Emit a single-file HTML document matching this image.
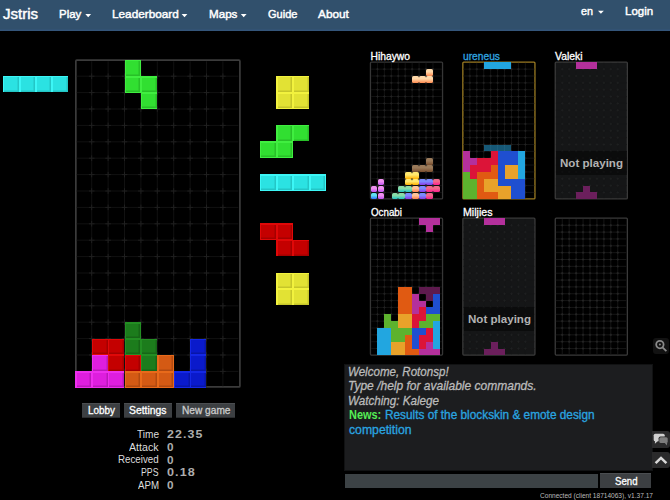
<!DOCTYPE html><html><head><meta charset="utf-8"><style>
html,body{margin:0;padding:0;width:670px;height:500px;overflow:hidden;background:#000;}
body{position:relative;font-family:"Liberation Sans",sans-serif;}
.t{position:absolute;white-space:pre;transform-origin:0 0;}
.bc{position:absolute;}
.bc i{position:absolute;left:1.4px;top:1.4px;right:0.5px;bottom:0.5px;}
.fc{position:absolute;}
.jc{position:absolute;border-radius:1.6px;}
.box{position:absolute;}
</style></head><body><div class="box" style="left:0;top:0;width:670px;height:30.6px;background:#31506c;box-shadow:inset 0 -1.6px 0 #34557a"></div><svg class="box" style="left:0;top:0" width="670" height="31" viewBox="0 0 670 31"><polygon points="85.30,13.90 91.10,13.90 88.20,17.20" fill="#fff"/><polygon points="181.60,13.90 187.40,13.90 184.50,17.20" fill="#fff"/><polygon points="240.80,13.90 246.60,13.90 243.70,17.20" fill="#fff"/><polygon points="598.00,10.70 603.80,10.70 600.90,13.70" fill="#fff"/></svg><svg class="box" style="left:0;top:0" width="670" height="500" viewBox="0 0 670 500"><rect x="75.85" y="60.15" width="164.05" height="326.8" rx="1" fill="none" stroke="#3b3b3b" stroke-width="1.7"/></svg><svg class="box" style="left:0;top:0" width="670" height="500" viewBox="0 0 670 500"><path d="M91.70 61.30V386.30M108.10 61.30V386.30M124.50 61.30V386.30M140.90 61.30V386.30M157.30 61.30V386.30M173.70 61.30V386.30M190.10 61.30V386.30M206.50 61.30V386.30M222.90 61.30V386.30M76.80 76.20H238.30M76.80 92.60H238.30M76.80 109.00H238.30M76.80 125.40H238.30M76.80 141.80H238.30M76.80 158.20H238.30M76.80 174.60H238.30M76.80 191.00H238.30M76.80 207.40H238.30M76.80 223.80H238.30M76.80 240.20H238.30M76.80 256.60H238.30M76.80 273.00H238.30M76.80 289.40H238.30M76.80 305.80H238.30M76.80 322.20H238.30M76.80 338.60H238.30M76.80 355.00H238.30M76.80 371.40H238.30" stroke="#111111" stroke-width="1" fill="none"/><path d="M88.90 76.20H94.50M91.70 73.40V79.00M88.90 92.60H94.50M91.70 89.80V95.40M88.90 109.00H94.50M91.70 106.20V111.80M88.90 125.40H94.50M91.70 122.60V128.20M88.90 141.80H94.50M91.70 139.00V144.60M88.90 158.20H94.50M91.70 155.40V161.00M88.90 174.60H94.50M91.70 171.80V177.40M88.90 191.00H94.50M91.70 188.20V193.80M88.90 207.40H94.50M91.70 204.60V210.20M88.90 223.80H94.50M91.70 221.00V226.60M88.90 240.20H94.50M91.70 237.40V243.00M88.90 256.60H94.50M91.70 253.80V259.40M88.90 273.00H94.50M91.70 270.20V275.80M88.90 289.40H94.50M91.70 286.60V292.20M88.90 305.80H94.50M91.70 303.00V308.60M88.90 322.20H94.50M91.70 319.40V325.00M88.90 338.60H94.50M91.70 335.80V341.40M88.90 355.00H94.50M91.70 352.20V357.80M88.90 371.40H94.50M91.70 368.60V374.20M105.30 76.20H110.90M108.10 73.40V79.00M105.30 92.60H110.90M108.10 89.80V95.40M105.30 109.00H110.90M108.10 106.20V111.80M105.30 125.40H110.90M108.10 122.60V128.20M105.30 141.80H110.90M108.10 139.00V144.60M105.30 158.20H110.90M108.10 155.40V161.00M105.30 174.60H110.90M108.10 171.80V177.40M105.30 191.00H110.90M108.10 188.20V193.80M105.30 207.40H110.90M108.10 204.60V210.20M105.30 223.80H110.90M108.10 221.00V226.60M105.30 240.20H110.90M108.10 237.40V243.00M105.30 256.60H110.90M108.10 253.80V259.40M105.30 273.00H110.90M108.10 270.20V275.80M105.30 289.40H110.90M108.10 286.60V292.20M105.30 305.80H110.90M108.10 303.00V308.60M105.30 322.20H110.90M108.10 319.40V325.00M105.30 338.60H110.90M108.10 335.80V341.40M105.30 355.00H110.90M108.10 352.20V357.80M105.30 371.40H110.90M108.10 368.60V374.20M121.70 76.20H127.30M124.50 73.40V79.00M121.70 92.60H127.30M124.50 89.80V95.40M121.70 109.00H127.30M124.50 106.20V111.80M121.70 125.40H127.30M124.50 122.60V128.20M121.70 141.80H127.30M124.50 139.00V144.60M121.70 158.20H127.30M124.50 155.40V161.00M121.70 174.60H127.30M124.50 171.80V177.40M121.70 191.00H127.30M124.50 188.20V193.80M121.70 207.40H127.30M124.50 204.60V210.20M121.70 223.80H127.30M124.50 221.00V226.60M121.70 240.20H127.30M124.50 237.40V243.00M121.70 256.60H127.30M124.50 253.80V259.40M121.70 273.00H127.30M124.50 270.20V275.80M121.70 289.40H127.30M124.50 286.60V292.20M121.70 305.80H127.30M124.50 303.00V308.60M121.70 322.20H127.30M124.50 319.40V325.00M121.70 338.60H127.30M124.50 335.80V341.40M121.70 355.00H127.30M124.50 352.20V357.80M121.70 371.40H127.30M124.50 368.60V374.20M138.10 76.20H143.70M140.90 73.40V79.00M138.10 92.60H143.70M140.90 89.80V95.40M138.10 109.00H143.70M140.90 106.20V111.80M138.10 125.40H143.70M140.90 122.60V128.20M138.10 141.80H143.70M140.90 139.00V144.60M138.10 158.20H143.70M140.90 155.40V161.00M138.10 174.60H143.70M140.90 171.80V177.40M138.10 191.00H143.70M140.90 188.20V193.80M138.10 207.40H143.70M140.90 204.60V210.20M138.10 223.80H143.70M140.90 221.00V226.60M138.10 240.20H143.70M140.90 237.40V243.00M138.10 256.60H143.70M140.90 253.80V259.40M138.10 273.00H143.70M140.90 270.20V275.80M138.10 289.40H143.70M140.90 286.60V292.20M138.10 305.80H143.70M140.90 303.00V308.60M138.10 322.20H143.70M140.90 319.40V325.00M138.10 338.60H143.70M140.90 335.80V341.40M138.10 355.00H143.70M140.90 352.20V357.80M138.10 371.40H143.70M140.90 368.60V374.20M154.50 76.20H160.10M157.30 73.40V79.00M154.50 92.60H160.10M157.30 89.80V95.40M154.50 109.00H160.10M157.30 106.20V111.80M154.50 125.40H160.10M157.30 122.60V128.20M154.50 141.80H160.10M157.30 139.00V144.60M154.50 158.20H160.10M157.30 155.40V161.00M154.50 174.60H160.10M157.30 171.80V177.40M154.50 191.00H160.10M157.30 188.20V193.80M154.50 207.40H160.10M157.30 204.60V210.20M154.50 223.80H160.10M157.30 221.00V226.60M154.50 240.20H160.10M157.30 237.40V243.00M154.50 256.60H160.10M157.30 253.80V259.40M154.50 273.00H160.10M157.30 270.20V275.80M154.50 289.40H160.10M157.30 286.60V292.20M154.50 305.80H160.10M157.30 303.00V308.60M154.50 322.20H160.10M157.30 319.40V325.00M154.50 338.60H160.10M157.30 335.80V341.40M154.50 355.00H160.10M157.30 352.20V357.80M154.50 371.40H160.10M157.30 368.60V374.20M170.90 76.20H176.50M173.70 73.40V79.00M170.90 92.60H176.50M173.70 89.80V95.40M170.90 109.00H176.50M173.70 106.20V111.80M170.90 125.40H176.50M173.70 122.60V128.20M170.90 141.80H176.50M173.70 139.00V144.60M170.90 158.20H176.50M173.70 155.40V161.00M170.90 174.60H176.50M173.70 171.80V177.40M170.90 191.00H176.50M173.70 188.20V193.80M170.90 207.40H176.50M173.70 204.60V210.20M170.90 223.80H176.50M173.70 221.00V226.60M170.90 240.20H176.50M173.70 237.40V243.00M170.90 256.60H176.50M173.70 253.80V259.40M170.90 273.00H176.50M173.70 270.20V275.80M170.90 289.40H176.50M173.70 286.60V292.20M170.90 305.80H176.50M173.70 303.00V308.60M170.90 322.20H176.50M173.70 319.40V325.00M170.90 338.60H176.50M173.70 335.80V341.40M170.90 355.00H176.50M173.70 352.20V357.80M170.90 371.40H176.50M173.70 368.60V374.20M187.30 76.20H192.90M190.10 73.40V79.00M187.30 92.60H192.90M190.10 89.80V95.40M187.30 109.00H192.90M190.10 106.20V111.80M187.30 125.40H192.90M190.10 122.60V128.20M187.30 141.80H192.90M190.10 139.00V144.60M187.30 158.20H192.90M190.10 155.40V161.00M187.30 174.60H192.90M190.10 171.80V177.40M187.30 191.00H192.90M190.10 188.20V193.80M187.30 207.40H192.90M190.10 204.60V210.20M187.30 223.80H192.90M190.10 221.00V226.60M187.30 240.20H192.90M190.10 237.40V243.00M187.30 256.60H192.90M190.10 253.80V259.40M187.30 273.00H192.90M190.10 270.20V275.80M187.30 289.40H192.90M190.10 286.60V292.20M187.30 305.80H192.90M190.10 303.00V308.60M187.30 322.20H192.90M190.10 319.40V325.00M187.30 338.60H192.90M190.10 335.80V341.40M187.30 355.00H192.90M190.10 352.20V357.80M187.30 371.40H192.90M190.10 368.60V374.20M203.70 76.20H209.30M206.50 73.40V79.00M203.70 92.60H209.30M206.50 89.80V95.40M203.70 109.00H209.30M206.50 106.20V111.80M203.70 125.40H209.30M206.50 122.60V128.20M203.70 141.80H209.30M206.50 139.00V144.60M203.70 158.20H209.30M206.50 155.40V161.00M203.70 174.60H209.30M206.50 171.80V177.40M203.70 191.00H209.30M206.50 188.20V193.80M203.70 207.40H209.30M206.50 204.60V210.20M203.70 223.80H209.30M206.50 221.00V226.60M203.70 240.20H209.30M206.50 237.40V243.00M203.70 256.60H209.30M206.50 253.80V259.40M203.70 273.00H209.30M206.50 270.20V275.80M203.70 289.40H209.30M206.50 286.60V292.20M203.70 305.80H209.30M206.50 303.00V308.60M203.70 322.20H209.30M206.50 319.40V325.00M203.70 338.60H209.30M206.50 335.80V341.40M203.70 355.00H209.30M206.50 352.20V357.80M203.70 371.40H209.30M206.50 368.60V374.20M220.10 76.20H225.70M222.90 73.40V79.00M220.10 92.60H225.70M222.90 89.80V95.40M220.10 109.00H225.70M222.90 106.20V111.80M220.10 125.40H225.70M222.90 122.60V128.20M220.10 141.80H225.70M222.90 139.00V144.60M220.10 158.20H225.70M222.90 155.40V161.00M220.10 174.60H225.70M222.90 171.80V177.40M220.10 191.00H225.70M222.90 188.20V193.80M220.10 207.40H225.70M222.90 204.60V210.20M220.10 223.80H225.70M222.90 221.00V226.60M220.10 240.20H225.70M222.90 237.40V243.00M220.10 256.60H225.70M222.90 253.80V259.40M220.10 273.00H225.70M222.90 270.20V275.80M220.10 289.40H225.70M222.90 286.60V292.20M220.10 305.80H225.70M222.90 303.00V308.60M220.10 322.20H225.70M222.90 319.40V325.00M220.10 338.60H225.70M222.90 335.80V341.40M220.10 355.00H225.70M222.90 352.20V357.80M220.10 371.40H225.70M222.90 368.60V374.20" stroke="#1f1f1f" stroke-width="1" fill="none"/></svg><div class="bc" style="left:124.5px;top:59.8px;width:16.4px;height:16.4px;background:#40ee40"><i style="background:#31df31;box-shadow:inset -1.5px -1.5px 0 #28c028"></i></div><div class="bc" style="left:124.5px;top:76.2px;width:16.4px;height:16.4px;background:#40ee40"><i style="background:#31df31;box-shadow:inset -1.5px -1.5px 0 #28c028"></i></div><div class="bc" style="left:140.9px;top:76.2px;width:16.4px;height:16.4px;background:#40ee40"><i style="background:#31df31;box-shadow:inset -1.5px -1.5px 0 #28c028"></i></div><div class="bc" style="left:140.9px;top:92.6px;width:16.4px;height:16.4px;background:#40ee40"><i style="background:#31df31;box-shadow:inset -1.5px -1.5px 0 #28c028"></i></div><div class="bc" style="left:124.5px;top:322.2px;width:16.4px;height:16.4px;background:#238e23"><i style="background:#1c7c1c;box-shadow:inset -1.5px -1.5px 0 #176617"></i></div><div class="bc" style="left:91.7px;top:338.6px;width:16.4px;height:16.4px;background:#e00808"><i style="background:#c40000;box-shadow:inset -1.5px -1.5px 0 #a40000"></i></div><div class="bc" style="left:108.1px;top:338.6px;width:16.4px;height:16.4px;background:#e00808"><i style="background:#c40000;box-shadow:inset -1.5px -1.5px 0 #a40000"></i></div><div class="bc" style="left:124.5px;top:338.6px;width:16.4px;height:16.4px;background:#238e23"><i style="background:#1c7c1c;box-shadow:inset -1.5px -1.5px 0 #176617"></i></div><div class="bc" style="left:140.9px;top:338.6px;width:16.4px;height:16.4px;background:#238e23"><i style="background:#1c7c1c;box-shadow:inset -1.5px -1.5px 0 #176617"></i></div><div class="bc" style="left:190.1px;top:338.6px;width:16.4px;height:16.4px;background:#1428e6"><i style="background:#0a1acb;box-shadow:inset -1.5px -1.5px 0 #0816a8"></i></div><div class="bc" style="left:91.7px;top:355px;width:16.4px;height:16.4px;background:#ee2eee"><i style="background:#de1ede;box-shadow:inset -1.5px -1.5px 0 #ba18ba"></i></div><div class="bc" style="left:108.1px;top:355px;width:16.4px;height:16.4px;background:#e00808"><i style="background:#c40000;box-shadow:inset -1.5px -1.5px 0 #a40000"></i></div><div class="bc" style="left:124.5px;top:355px;width:16.4px;height:16.4px;background:#e00808"><i style="background:#c40000;box-shadow:inset -1.5px -1.5px 0 #a40000"></i></div><div class="bc" style="left:140.9px;top:355px;width:16.4px;height:16.4px;background:#238e23"><i style="background:#1c7c1c;box-shadow:inset -1.5px -1.5px 0 #176617"></i></div><div class="bc" style="left:157.3px;top:355px;width:16.4px;height:16.4px;background:#e86a1a"><i style="background:#d45a14;box-shadow:inset -1.5px -1.5px 0 #b24a10"></i></div><div class="bc" style="left:190.1px;top:355px;width:16.4px;height:16.4px;background:#1428e6"><i style="background:#0a1acb;box-shadow:inset -1.5px -1.5px 0 #0816a8"></i></div><div class="bc" style="left:75.3px;top:371.4px;width:16.4px;height:16.4px;background:#ee2eee"><i style="background:#de1ede;box-shadow:inset -1.5px -1.5px 0 #ba18ba"></i></div><div class="bc" style="left:91.7px;top:371.4px;width:16.4px;height:16.4px;background:#ee2eee"><i style="background:#de1ede;box-shadow:inset -1.5px -1.5px 0 #ba18ba"></i></div><div class="bc" style="left:108.1px;top:371.4px;width:16.4px;height:16.4px;background:#ee2eee"><i style="background:#de1ede;box-shadow:inset -1.5px -1.5px 0 #ba18ba"></i></div><div class="bc" style="left:124.5px;top:371.4px;width:16.4px;height:16.4px;background:#e86a1a"><i style="background:#d45a14;box-shadow:inset -1.5px -1.5px 0 #b24a10"></i></div><div class="bc" style="left:140.9px;top:371.4px;width:16.4px;height:16.4px;background:#e86a1a"><i style="background:#d45a14;box-shadow:inset -1.5px -1.5px 0 #b24a10"></i></div><div class="bc" style="left:157.3px;top:371.4px;width:16.4px;height:16.4px;background:#e86a1a"><i style="background:#d45a14;box-shadow:inset -1.5px -1.5px 0 #b24a10"></i></div><div class="bc" style="left:173.7px;top:371.4px;width:16.4px;height:16.4px;background:#1428e6"><i style="background:#0a1acb;box-shadow:inset -1.5px -1.5px 0 #0816a8"></i></div><div class="bc" style="left:190.1px;top:371.4px;width:16.4px;height:16.4px;background:#1428e6"><i style="background:#0a1acb;box-shadow:inset -1.5px -1.5px 0 #0816a8"></i></div><div class="bc" style="left:3px;top:75.9px;width:16.3px;height:16.3px;background:#3cf6f6"><i style="background:#2be2e2;box-shadow:inset -1.5px -1.5px 0 #24c6c6"></i></div><div class="bc" style="left:19.3px;top:75.9px;width:16.3px;height:16.3px;background:#3cf6f6"><i style="background:#2be2e2;box-shadow:inset -1.5px -1.5px 0 #24c6c6"></i></div><div class="bc" style="left:35.6px;top:75.9px;width:16.3px;height:16.3px;background:#3cf6f6"><i style="background:#2be2e2;box-shadow:inset -1.5px -1.5px 0 #24c6c6"></i></div><div class="bc" style="left:51.9px;top:75.9px;width:16.3px;height:16.3px;background:#3cf6f6"><i style="background:#2be2e2;box-shadow:inset -1.5px -1.5px 0 #24c6c6"></i></div><div class="bc" style="left:276.4px;top:75.8px;width:16.4px;height:16.4px;background:#f2f23e"><i style="background:#e2e234;box-shadow:inset -1.5px -1.5px 0 #c6c62a"></i></div><div class="bc" style="left:292.8px;top:75.8px;width:16.4px;height:16.4px;background:#f2f23e"><i style="background:#e2e234;box-shadow:inset -1.5px -1.5px 0 #c6c62a"></i></div><div class="bc" style="left:276.4px;top:92.2px;width:16.4px;height:16.4px;background:#f2f23e"><i style="background:#e2e234;box-shadow:inset -1.5px -1.5px 0 #c6c62a"></i></div><div class="bc" style="left:292.8px;top:92.2px;width:16.4px;height:16.4px;background:#f2f23e"><i style="background:#e2e234;box-shadow:inset -1.5px -1.5px 0 #c6c62a"></i></div><div class="bc" style="left:276.4px;top:125px;width:16.4px;height:16.4px;background:#40ee40"><i style="background:#31df31;box-shadow:inset -1.5px -1.5px 0 #28c028"></i></div><div class="bc" style="left:292.8px;top:125px;width:16.4px;height:16.4px;background:#40ee40"><i style="background:#31df31;box-shadow:inset -1.5px -1.5px 0 #28c028"></i></div><div class="bc" style="left:260px;top:141.4px;width:16.4px;height:16.4px;background:#40ee40"><i style="background:#31df31;box-shadow:inset -1.5px -1.5px 0 #28c028"></i></div><div class="bc" style="left:276.4px;top:141.4px;width:16.4px;height:16.4px;background:#40ee40"><i style="background:#31df31;box-shadow:inset -1.5px -1.5px 0 #28c028"></i></div><div class="bc" style="left:260px;top:174.2px;width:16.4px;height:16.4px;background:#3cf6f6"><i style="background:#2be2e2;box-shadow:inset -1.5px -1.5px 0 #24c6c6"></i></div><div class="bc" style="left:276.4px;top:174.2px;width:16.4px;height:16.4px;background:#3cf6f6"><i style="background:#2be2e2;box-shadow:inset -1.5px -1.5px 0 #24c6c6"></i></div><div class="bc" style="left:292.8px;top:174.2px;width:16.4px;height:16.4px;background:#3cf6f6"><i style="background:#2be2e2;box-shadow:inset -1.5px -1.5px 0 #24c6c6"></i></div><div class="bc" style="left:309.2px;top:174.2px;width:16.4px;height:16.4px;background:#3cf6f6"><i style="background:#2be2e2;box-shadow:inset -1.5px -1.5px 0 #24c6c6"></i></div><div class="bc" style="left:260px;top:223.4px;width:16.4px;height:16.4px;background:#e00808"><i style="background:#c40000;box-shadow:inset -1.5px -1.5px 0 #a40000"></i></div><div class="bc" style="left:276.4px;top:223.4px;width:16.4px;height:16.4px;background:#e00808"><i style="background:#c40000;box-shadow:inset -1.5px -1.5px 0 #a40000"></i></div><div class="bc" style="left:276.4px;top:239.8px;width:16.4px;height:16.4px;background:#e00808"><i style="background:#c40000;box-shadow:inset -1.5px -1.5px 0 #a40000"></i></div><div class="bc" style="left:292.8px;top:239.8px;width:16.4px;height:16.4px;background:#e00808"><i style="background:#c40000;box-shadow:inset -1.5px -1.5px 0 #a40000"></i></div><div class="bc" style="left:276.4px;top:272.6px;width:16.4px;height:16.4px;background:#f2f23e"><i style="background:#e2e234;box-shadow:inset -1.5px -1.5px 0 #c6c62a"></i></div><div class="bc" style="left:292.8px;top:272.6px;width:16.4px;height:16.4px;background:#f2f23e"><i style="background:#e2e234;box-shadow:inset -1.5px -1.5px 0 #c6c62a"></i></div><div class="bc" style="left:276.4px;top:289px;width:16.4px;height:16.4px;background:#f2f23e"><i style="background:#e2e234;box-shadow:inset -1.5px -1.5px 0 #c6c62a"></i></div><div class="bc" style="left:292.8px;top:289px;width:16.4px;height:16.4px;background:#f2f23e"><i style="background:#e2e234;box-shadow:inset -1.5px -1.5px 0 #c6c62a"></i></div><svg class="box" style="left:0;top:0" width="670" height="500" viewBox="0 0 670 500"><rect x="370.45" y="62.05" width="72.10" height="136.90" rx="1" fill="#000" stroke="#363636" stroke-width="1.3"/></svg><svg class="box" style="left:0;top:0" width="670" height="500" viewBox="0 0 670 500"><path d="M377.44 62.90V198.10M384.38 62.90V198.10M391.32 62.90V198.10M398.26 62.90V198.10M405.20 62.90V198.10M412.14 62.90V198.10M419.08 62.90V198.10M426.02 62.90V198.10M432.96 62.90V198.10M371.10 69.15H441.90M371.10 76.00H441.90M371.10 82.85H441.90M371.10 89.70H441.90M371.10 96.55H441.90M371.10 103.40H441.90M371.10 110.25H441.90M371.10 117.10H441.90M371.10 123.95H441.90M371.10 130.80H441.90M371.10 137.65H441.90M371.10 144.50H441.90M371.10 151.35H441.90M371.10 158.20H441.90M371.10 165.05H441.90M371.10 171.90H441.90M371.10 178.75H441.90M371.10 185.60H441.90M371.10 192.45H441.90" stroke="#121212" stroke-width="1" fill="none"/><path d="M376.24 69.15H378.64M377.44 67.95V70.35M376.24 76.00H378.64M377.44 74.80V77.20M376.24 82.85H378.64M377.44 81.65V84.05M376.24 89.70H378.64M377.44 88.50V90.90M376.24 96.55H378.64M377.44 95.35V97.75M376.24 103.40H378.64M377.44 102.20V104.60M376.24 110.25H378.64M377.44 109.05V111.45M376.24 117.10H378.64M377.44 115.90V118.30M376.24 123.95H378.64M377.44 122.75V125.15M376.24 130.80H378.64M377.44 129.60V132.00M376.24 137.65H378.64M377.44 136.45V138.85M376.24 144.50H378.64M377.44 143.30V145.70M376.24 151.35H378.64M377.44 150.15V152.55M376.24 158.20H378.64M377.44 157.00V159.40M376.24 165.05H378.64M377.44 163.85V166.25M376.24 171.90H378.64M377.44 170.70V173.10M376.24 178.75H378.64M377.44 177.55V179.95M376.24 185.60H378.64M377.44 184.40V186.80M376.24 192.45H378.64M377.44 191.25V193.65M383.18 69.15H385.58M384.38 67.95V70.35M383.18 76.00H385.58M384.38 74.80V77.20M383.18 82.85H385.58M384.38 81.65V84.05M383.18 89.70H385.58M384.38 88.50V90.90M383.18 96.55H385.58M384.38 95.35V97.75M383.18 103.40H385.58M384.38 102.20V104.60M383.18 110.25H385.58M384.38 109.05V111.45M383.18 117.10H385.58M384.38 115.90V118.30M383.18 123.95H385.58M384.38 122.75V125.15M383.18 130.80H385.58M384.38 129.60V132.00M383.18 137.65H385.58M384.38 136.45V138.85M383.18 144.50H385.58M384.38 143.30V145.70M383.18 151.35H385.58M384.38 150.15V152.55M383.18 158.20H385.58M384.38 157.00V159.40M383.18 165.05H385.58M384.38 163.85V166.25M383.18 171.90H385.58M384.38 170.70V173.10M383.18 178.75H385.58M384.38 177.55V179.95M383.18 185.60H385.58M384.38 184.40V186.80M383.18 192.45H385.58M384.38 191.25V193.65M390.12 69.15H392.52M391.32 67.95V70.35M390.12 76.00H392.52M391.32 74.80V77.20M390.12 82.85H392.52M391.32 81.65V84.05M390.12 89.70H392.52M391.32 88.50V90.90M390.12 96.55H392.52M391.32 95.35V97.75M390.12 103.40H392.52M391.32 102.20V104.60M390.12 110.25H392.52M391.32 109.05V111.45M390.12 117.10H392.52M391.32 115.90V118.30M390.12 123.95H392.52M391.32 122.75V125.15M390.12 130.80H392.52M391.32 129.60V132.00M390.12 137.65H392.52M391.32 136.45V138.85M390.12 144.50H392.52M391.32 143.30V145.70M390.12 151.35H392.52M391.32 150.15V152.55M390.12 158.20H392.52M391.32 157.00V159.40M390.12 165.05H392.52M391.32 163.85V166.25M390.12 171.90H392.52M391.32 170.70V173.10M390.12 178.75H392.52M391.32 177.55V179.95M390.12 185.60H392.52M391.32 184.40V186.80M390.12 192.45H392.52M391.32 191.25V193.65M397.06 69.15H399.46M398.26 67.95V70.35M397.06 76.00H399.46M398.26 74.80V77.20M397.06 82.85H399.46M398.26 81.65V84.05M397.06 89.70H399.46M398.26 88.50V90.90M397.06 96.55H399.46M398.26 95.35V97.75M397.06 103.40H399.46M398.26 102.20V104.60M397.06 110.25H399.46M398.26 109.05V111.45M397.06 117.10H399.46M398.26 115.90V118.30M397.06 123.95H399.46M398.26 122.75V125.15M397.06 130.80H399.46M398.26 129.60V132.00M397.06 137.65H399.46M398.26 136.45V138.85M397.06 144.50H399.46M398.26 143.30V145.70M397.06 151.35H399.46M398.26 150.15V152.55M397.06 158.20H399.46M398.26 157.00V159.40M397.06 165.05H399.46M398.26 163.85V166.25M397.06 171.90H399.46M398.26 170.70V173.10M397.06 178.75H399.46M398.26 177.55V179.95M397.06 185.60H399.46M398.26 184.40V186.80M397.06 192.45H399.46M398.26 191.25V193.65M404.00 69.15H406.40M405.20 67.95V70.35M404.00 76.00H406.40M405.20 74.80V77.20M404.00 82.85H406.40M405.20 81.65V84.05M404.00 89.70H406.40M405.20 88.50V90.90M404.00 96.55H406.40M405.20 95.35V97.75M404.00 103.40H406.40M405.20 102.20V104.60M404.00 110.25H406.40M405.20 109.05V111.45M404.00 117.10H406.40M405.20 115.90V118.30M404.00 123.95H406.40M405.20 122.75V125.15M404.00 130.80H406.40M405.20 129.60V132.00M404.00 137.65H406.40M405.20 136.45V138.85M404.00 144.50H406.40M405.20 143.30V145.70M404.00 151.35H406.40M405.20 150.15V152.55M404.00 158.20H406.40M405.20 157.00V159.40M404.00 165.05H406.40M405.20 163.85V166.25M404.00 171.90H406.40M405.20 170.70V173.10M404.00 178.75H406.40M405.20 177.55V179.95M404.00 185.60H406.40M405.20 184.40V186.80M404.00 192.45H406.40M405.20 191.25V193.65M410.94 69.15H413.34M412.14 67.95V70.35M410.94 76.00H413.34M412.14 74.80V77.20M410.94 82.85H413.34M412.14 81.65V84.05M410.94 89.70H413.34M412.14 88.50V90.90M410.94 96.55H413.34M412.14 95.35V97.75M410.94 103.40H413.34M412.14 102.20V104.60M410.94 110.25H413.34M412.14 109.05V111.45M410.94 117.10H413.34M412.14 115.90V118.30M410.94 123.95H413.34M412.14 122.75V125.15M410.94 130.80H413.34M412.14 129.60V132.00M410.94 137.65H413.34M412.14 136.45V138.85M410.94 144.50H413.34M412.14 143.30V145.70M410.94 151.35H413.34M412.14 150.15V152.55M410.94 158.20H413.34M412.14 157.00V159.40M410.94 165.05H413.34M412.14 163.85V166.25M410.94 171.90H413.34M412.14 170.70V173.10M410.94 178.75H413.34M412.14 177.55V179.95M410.94 185.60H413.34M412.14 184.40V186.80M410.94 192.45H413.34M412.14 191.25V193.65M417.88 69.15H420.28M419.08 67.95V70.35M417.88 76.00H420.28M419.08 74.80V77.20M417.88 82.85H420.28M419.08 81.65V84.05M417.88 89.70H420.28M419.08 88.50V90.90M417.88 96.55H420.28M419.08 95.35V97.75M417.88 103.40H420.28M419.08 102.20V104.60M417.88 110.25H420.28M419.08 109.05V111.45M417.88 117.10H420.28M419.08 115.90V118.30M417.88 123.95H420.28M419.08 122.75V125.15M417.88 130.80H420.28M419.08 129.60V132.00M417.88 137.65H420.28M419.08 136.45V138.85M417.88 144.50H420.28M419.08 143.30V145.70M417.88 151.35H420.28M419.08 150.15V152.55M417.88 158.20H420.28M419.08 157.00V159.40M417.88 165.05H420.28M419.08 163.85V166.25M417.88 171.90H420.28M419.08 170.70V173.10M417.88 178.75H420.28M419.08 177.55V179.95M417.88 185.60H420.28M419.08 184.40V186.80M417.88 192.45H420.28M419.08 191.25V193.65M424.82 69.15H427.22M426.02 67.95V70.35M424.82 76.00H427.22M426.02 74.80V77.20M424.82 82.85H427.22M426.02 81.65V84.05M424.82 89.70H427.22M426.02 88.50V90.90M424.82 96.55H427.22M426.02 95.35V97.75M424.82 103.40H427.22M426.02 102.20V104.60M424.82 110.25H427.22M426.02 109.05V111.45M424.82 117.10H427.22M426.02 115.90V118.30M424.82 123.95H427.22M426.02 122.75V125.15M424.82 130.80H427.22M426.02 129.60V132.00M424.82 137.65H427.22M426.02 136.45V138.85M424.82 144.50H427.22M426.02 143.30V145.70M424.82 151.35H427.22M426.02 150.15V152.55M424.82 158.20H427.22M426.02 157.00V159.40M424.82 165.05H427.22M426.02 163.85V166.25M424.82 171.90H427.22M426.02 170.70V173.10M424.82 178.75H427.22M426.02 177.55V179.95M424.82 185.60H427.22M426.02 184.40V186.80M424.82 192.45H427.22M426.02 191.25V193.65M431.76 69.15H434.16M432.96 67.95V70.35M431.76 76.00H434.16M432.96 74.80V77.20M431.76 82.85H434.16M432.96 81.65V84.05M431.76 89.70H434.16M432.96 88.50V90.90M431.76 96.55H434.16M432.96 95.35V97.75M431.76 103.40H434.16M432.96 102.20V104.60M431.76 110.25H434.16M432.96 109.05V111.45M431.76 117.10H434.16M432.96 115.90V118.30M431.76 123.95H434.16M432.96 122.75V125.15M431.76 130.80H434.16M432.96 129.60V132.00M431.76 137.65H434.16M432.96 136.45V138.85M431.76 144.50H434.16M432.96 143.30V145.70M431.76 151.35H434.16M432.96 150.15V152.55M431.76 158.20H434.16M432.96 157.00V159.40M431.76 165.05H434.16M432.96 163.85V166.25M431.76 171.90H434.16M432.96 170.70V173.10M431.76 178.75H434.16M432.96 177.55V179.95M431.76 185.60H434.16M432.96 184.40V186.80M431.76 192.45H434.16M432.96 191.25V193.65" stroke="#222222" stroke-width="1" fill="none"/></svg><div class="jc" style="left:426.22px;top:69.35px;width:6.54px;height:6.45px;background:linear-gradient(#ffd8a8 0%,#ffd8a8 40%,#ff8a50 100%)"></div><div class="jc" style="left:412.34px;top:76.2px;width:6.54px;height:6.45px;background:linear-gradient(#ffd8a8 0%,#ffd8a8 40%,#ff8a50 100%)"></div><div class="jc" style="left:419.28px;top:76.2px;width:6.54px;height:6.45px;background:linear-gradient(#ffd8a8 0%,#ffd8a8 40%,#ff8a50 100%)"></div><div class="jc" style="left:426.22px;top:76.2px;width:6.54px;height:6.45px;background:linear-gradient(#ffd8a8 0%,#ffd8a8 40%,#ff8a50 100%)"></div><div class="jc" style="left:426.22px;top:158.4px;width:6.54px;height:6.45px;background:linear-gradient(#9a7a5a 0%,#9a7a5a 40%,#7a4e2e 100%)"></div><div class="jc" style="left:412.34px;top:165.25px;width:6.54px;height:6.45px;background:linear-gradient(#9a7a5a 0%,#9a7a5a 40%,#7a4e2e 100%)"></div><div class="jc" style="left:419.28px;top:165.25px;width:6.54px;height:6.45px;background:linear-gradient(#9a7a5a 0%,#9a7a5a 40%,#7a4e2e 100%)"></div><div class="jc" style="left:426.22px;top:165.25px;width:6.54px;height:6.45px;background:linear-gradient(#9a7a5a 0%,#9a7a5a 40%,#7a4e2e 100%)"></div><div class="jc" style="left:405.4px;top:172.1px;width:6.54px;height:6.45px;background:linear-gradient(#ffe870 0%,#ffe870 40%,#ffb000 100%)"></div><div class="jc" style="left:412.34px;top:172.1px;width:6.54px;height:6.45px;background:linear-gradient(#ffe870 0%,#ffe870 40%,#ffb000 100%)"></div><div class="jc" style="left:377.64px;top:178.95px;width:6.54px;height:6.45px;background:linear-gradient(#f090f0 0%,#f090f0 40%,#c050f0 100%)"></div><div class="jc" style="left:405.4px;top:178.95px;width:6.54px;height:6.45px;background:linear-gradient(#ffe870 0%,#ffe870 40%,#ffb000 100%)"></div><div class="jc" style="left:412.34px;top:178.95px;width:6.54px;height:6.45px;background:linear-gradient(#ffe870 0%,#ffe870 40%,#ffb000 100%)"></div><div class="jc" style="left:419.28px;top:178.95px;width:6.54px;height:6.45px;background:linear-gradient(#7c8cff 0%,#7c8cff 40%,#8a3ae8 100%)"></div><div class="jc" style="left:426.22px;top:178.95px;width:6.54px;height:6.45px;background:linear-gradient(#7c8cff 0%,#7c8cff 40%,#8a3ae8 100%)"></div><div class="jc" style="left:433.16px;top:178.95px;width:6.54px;height:6.45px;background:linear-gradient(#f06a8a 0%,#f06a8a 40%,#ff1f8f 100%)"></div><div class="jc" style="left:370.7px;top:185.8px;width:6.54px;height:6.45px;background:linear-gradient(#f090f0 0%,#f090f0 40%,#c050f0 100%)"></div><div class="jc" style="left:377.64px;top:185.8px;width:6.54px;height:6.45px;background:linear-gradient(#f090f0 0%,#f090f0 40%,#c050f0 100%)"></div><div class="jc" style="left:398.46px;top:185.8px;width:6.54px;height:6.45px;background:linear-gradient(#8adca8 0%,#8adca8 40%,#22c4c4 100%)"></div><div class="jc" style="left:405.4px;top:185.8px;width:6.54px;height:6.45px;background:linear-gradient(#8adca8 0%,#8adca8 40%,#22c4c4 100%)"></div><div class="jc" style="left:412.34px;top:185.8px;width:6.54px;height:6.45px;background:linear-gradient(#ffc49a 0%,#ffc49a 40%,#ff7f4e 100%)"></div><div class="jc" style="left:419.28px;top:185.8px;width:6.54px;height:6.45px;background:linear-gradient(#7c8cff 0%,#7c8cff 40%,#8a3ae8 100%)"></div><div class="jc" style="left:426.22px;top:185.8px;width:6.54px;height:6.45px;background:linear-gradient(#f06a8a 0%,#f06a8a 40%,#ff1f8f 100%)"></div><div class="jc" style="left:433.16px;top:185.8px;width:6.54px;height:6.45px;background:linear-gradient(#f06a8a 0%,#f06a8a 40%,#ff1f8f 100%)"></div><div class="jc" style="left:370.7px;top:192.65px;width:6.54px;height:6.45px;background:linear-gradient(#60e0f0 0%,#60e0f0 40%,#3070ff 100%)"></div><div class="jc" style="left:377.64px;top:192.65px;width:6.54px;height:6.45px;background:linear-gradient(#f090f0 0%,#f090f0 40%,#c050f0 100%)"></div><div class="jc" style="left:391.52px;top:192.65px;width:6.54px;height:6.45px;background:linear-gradient(#8adca8 0%,#8adca8 40%,#22c4c4 100%)"></div><div class="jc" style="left:398.46px;top:192.65px;width:6.54px;height:6.45px;background:linear-gradient(#8adca8 0%,#8adca8 40%,#22c4c4 100%)"></div><div class="jc" style="left:405.4px;top:192.65px;width:6.54px;height:6.45px;background:linear-gradient(#7c8cff 0%,#7c8cff 40%,#8a3ae8 100%)"></div><div class="jc" style="left:412.34px;top:192.65px;width:6.54px;height:6.45px;background:linear-gradient(#ffc49a 0%,#ffc49a 40%,#ff7f4e 100%)"></div><div class="jc" style="left:419.28px;top:192.65px;width:6.54px;height:6.45px;background:linear-gradient(#7c8cff 0%,#7c8cff 40%,#8a3ae8 100%)"></div><div class="jc" style="left:426.22px;top:192.65px;width:6.54px;height:6.45px;background:linear-gradient(#f06a8a 0%,#f06a8a 40%,#ff1f8f 100%)"></div><svg class="box" style="left:0;top:0" width="670" height="500" viewBox="0 0 670 500"><rect x="462.85" y="62.05" width="72.10" height="136.90" rx="1" fill="#000" stroke="#9a7a22" stroke-width="1.3"/></svg><svg class="box" style="left:0;top:0" width="670" height="500" viewBox="0 0 670 500"><path d="M469.84 62.90V198.10M476.78 62.90V198.10M483.72 62.90V198.10M490.66 62.90V198.10M497.60 62.90V198.10M504.54 62.90V198.10M511.48 62.90V198.10M518.42 62.90V198.10M525.36 62.90V198.10M463.50 69.15H534.30M463.50 76.00H534.30M463.50 82.85H534.30M463.50 89.70H534.30M463.50 96.55H534.30M463.50 103.40H534.30M463.50 110.25H534.30M463.50 117.10H534.30M463.50 123.95H534.30M463.50 130.80H534.30M463.50 137.65H534.30M463.50 144.50H534.30M463.50 151.35H534.30M463.50 158.20H534.30M463.50 165.05H534.30M463.50 171.90H534.30M463.50 178.75H534.30M463.50 185.60H534.30M463.50 192.45H534.30" stroke="#121212" stroke-width="1" fill="none"/><path d="M468.64 69.15H471.04M469.84 67.95V70.35M468.64 76.00H471.04M469.84 74.80V77.20M468.64 82.85H471.04M469.84 81.65V84.05M468.64 89.70H471.04M469.84 88.50V90.90M468.64 96.55H471.04M469.84 95.35V97.75M468.64 103.40H471.04M469.84 102.20V104.60M468.64 110.25H471.04M469.84 109.05V111.45M468.64 117.10H471.04M469.84 115.90V118.30M468.64 123.95H471.04M469.84 122.75V125.15M468.64 130.80H471.04M469.84 129.60V132.00M468.64 137.65H471.04M469.84 136.45V138.85M468.64 144.50H471.04M469.84 143.30V145.70M468.64 151.35H471.04M469.84 150.15V152.55M468.64 158.20H471.04M469.84 157.00V159.40M468.64 165.05H471.04M469.84 163.85V166.25M468.64 171.90H471.04M469.84 170.70V173.10M468.64 178.75H471.04M469.84 177.55V179.95M468.64 185.60H471.04M469.84 184.40V186.80M468.64 192.45H471.04M469.84 191.25V193.65M475.58 69.15H477.98M476.78 67.95V70.35M475.58 76.00H477.98M476.78 74.80V77.20M475.58 82.85H477.98M476.78 81.65V84.05M475.58 89.70H477.98M476.78 88.50V90.90M475.58 96.55H477.98M476.78 95.35V97.75M475.58 103.40H477.98M476.78 102.20V104.60M475.58 110.25H477.98M476.78 109.05V111.45M475.58 117.10H477.98M476.78 115.90V118.30M475.58 123.95H477.98M476.78 122.75V125.15M475.58 130.80H477.98M476.78 129.60V132.00M475.58 137.65H477.98M476.78 136.45V138.85M475.58 144.50H477.98M476.78 143.30V145.70M475.58 151.35H477.98M476.78 150.15V152.55M475.58 158.20H477.98M476.78 157.00V159.40M475.58 165.05H477.98M476.78 163.85V166.25M475.58 171.90H477.98M476.78 170.70V173.10M475.58 178.75H477.98M476.78 177.55V179.95M475.58 185.60H477.98M476.78 184.40V186.80M475.58 192.45H477.98M476.78 191.25V193.65M482.52 69.15H484.92M483.72 67.95V70.35M482.52 76.00H484.92M483.72 74.80V77.20M482.52 82.85H484.92M483.72 81.65V84.05M482.52 89.70H484.92M483.72 88.50V90.90M482.52 96.55H484.92M483.72 95.35V97.75M482.52 103.40H484.92M483.72 102.20V104.60M482.52 110.25H484.92M483.72 109.05V111.45M482.52 117.10H484.92M483.72 115.90V118.30M482.52 123.95H484.92M483.72 122.75V125.15M482.52 130.80H484.92M483.72 129.60V132.00M482.52 137.65H484.92M483.72 136.45V138.85M482.52 144.50H484.92M483.72 143.30V145.70M482.52 151.35H484.92M483.72 150.15V152.55M482.52 158.20H484.92M483.72 157.00V159.40M482.52 165.05H484.92M483.72 163.85V166.25M482.52 171.90H484.92M483.72 170.70V173.10M482.52 178.75H484.92M483.72 177.55V179.95M482.52 185.60H484.92M483.72 184.40V186.80M482.52 192.45H484.92M483.72 191.25V193.65M489.46 69.15H491.86M490.66 67.95V70.35M489.46 76.00H491.86M490.66 74.80V77.20M489.46 82.85H491.86M490.66 81.65V84.05M489.46 89.70H491.86M490.66 88.50V90.90M489.46 96.55H491.86M490.66 95.35V97.75M489.46 103.40H491.86M490.66 102.20V104.60M489.46 110.25H491.86M490.66 109.05V111.45M489.46 117.10H491.86M490.66 115.90V118.30M489.46 123.95H491.86M490.66 122.75V125.15M489.46 130.80H491.86M490.66 129.60V132.00M489.46 137.65H491.86M490.66 136.45V138.85M489.46 144.50H491.86M490.66 143.30V145.70M489.46 151.35H491.86M490.66 150.15V152.55M489.46 158.20H491.86M490.66 157.00V159.40M489.46 165.05H491.86M490.66 163.85V166.25M489.46 171.90H491.86M490.66 170.70V173.10M489.46 178.75H491.86M490.66 177.55V179.95M489.46 185.60H491.86M490.66 184.40V186.80M489.46 192.45H491.86M490.66 191.25V193.65M496.40 69.15H498.80M497.60 67.95V70.35M496.40 76.00H498.80M497.60 74.80V77.20M496.40 82.85H498.80M497.60 81.65V84.05M496.40 89.70H498.80M497.60 88.50V90.90M496.40 96.55H498.80M497.60 95.35V97.75M496.40 103.40H498.80M497.60 102.20V104.60M496.40 110.25H498.80M497.60 109.05V111.45M496.40 117.10H498.80M497.60 115.90V118.30M496.40 123.95H498.80M497.60 122.75V125.15M496.40 130.80H498.80M497.60 129.60V132.00M496.40 137.65H498.80M497.60 136.45V138.85M496.40 144.50H498.80M497.60 143.30V145.70M496.40 151.35H498.80M497.60 150.15V152.55M496.40 158.20H498.80M497.60 157.00V159.40M496.40 165.05H498.80M497.60 163.85V166.25M496.40 171.90H498.80M497.60 170.70V173.10M496.40 178.75H498.80M497.60 177.55V179.95M496.40 185.60H498.80M497.60 184.40V186.80M496.40 192.45H498.80M497.60 191.25V193.65M503.34 69.15H505.74M504.54 67.95V70.35M503.34 76.00H505.74M504.54 74.80V77.20M503.34 82.85H505.74M504.54 81.65V84.05M503.34 89.70H505.74M504.54 88.50V90.90M503.34 96.55H505.74M504.54 95.35V97.75M503.34 103.40H505.74M504.54 102.20V104.60M503.34 110.25H505.74M504.54 109.05V111.45M503.34 117.10H505.74M504.54 115.90V118.30M503.34 123.95H505.74M504.54 122.75V125.15M503.34 130.80H505.74M504.54 129.60V132.00M503.34 137.65H505.74M504.54 136.45V138.85M503.34 144.50H505.74M504.54 143.30V145.70M503.34 151.35H505.74M504.54 150.15V152.55M503.34 158.20H505.74M504.54 157.00V159.40M503.34 165.05H505.74M504.54 163.85V166.25M503.34 171.90H505.74M504.54 170.70V173.10M503.34 178.75H505.74M504.54 177.55V179.95M503.34 185.60H505.74M504.54 184.40V186.80M503.34 192.45H505.74M504.54 191.25V193.65M510.28 69.15H512.68M511.48 67.95V70.35M510.28 76.00H512.68M511.48 74.80V77.20M510.28 82.85H512.68M511.48 81.65V84.05M510.28 89.70H512.68M511.48 88.50V90.90M510.28 96.55H512.68M511.48 95.35V97.75M510.28 103.40H512.68M511.48 102.20V104.60M510.28 110.25H512.68M511.48 109.05V111.45M510.28 117.10H512.68M511.48 115.90V118.30M510.28 123.95H512.68M511.48 122.75V125.15M510.28 130.80H512.68M511.48 129.60V132.00M510.28 137.65H512.68M511.48 136.45V138.85M510.28 144.50H512.68M511.48 143.30V145.70M510.28 151.35H512.68M511.48 150.15V152.55M510.28 158.20H512.68M511.48 157.00V159.40M510.28 165.05H512.68M511.48 163.85V166.25M510.28 171.90H512.68M511.48 170.70V173.10M510.28 178.75H512.68M511.48 177.55V179.95M510.28 185.60H512.68M511.48 184.40V186.80M510.28 192.45H512.68M511.48 191.25V193.65M517.22 69.15H519.62M518.42 67.95V70.35M517.22 76.00H519.62M518.42 74.80V77.20M517.22 82.85H519.62M518.42 81.65V84.05M517.22 89.70H519.62M518.42 88.50V90.90M517.22 96.55H519.62M518.42 95.35V97.75M517.22 103.40H519.62M518.42 102.20V104.60M517.22 110.25H519.62M518.42 109.05V111.45M517.22 117.10H519.62M518.42 115.90V118.30M517.22 123.95H519.62M518.42 122.75V125.15M517.22 130.80H519.62M518.42 129.60V132.00M517.22 137.65H519.62M518.42 136.45V138.85M517.22 144.50H519.62M518.42 143.30V145.70M517.22 151.35H519.62M518.42 150.15V152.55M517.22 158.20H519.62M518.42 157.00V159.40M517.22 165.05H519.62M518.42 163.85V166.25M517.22 171.90H519.62M518.42 170.70V173.10M517.22 178.75H519.62M518.42 177.55V179.95M517.22 185.60H519.62M518.42 184.40V186.80M517.22 192.45H519.62M518.42 191.25V193.65M524.16 69.15H526.56M525.36 67.95V70.35M524.16 76.00H526.56M525.36 74.80V77.20M524.16 82.85H526.56M525.36 81.65V84.05M524.16 89.70H526.56M525.36 88.50V90.90M524.16 96.55H526.56M525.36 95.35V97.75M524.16 103.40H526.56M525.36 102.20V104.60M524.16 110.25H526.56M525.36 109.05V111.45M524.16 117.10H526.56M525.36 115.90V118.30M524.16 123.95H526.56M525.36 122.75V125.15M524.16 130.80H526.56M525.36 129.60V132.00M524.16 137.65H526.56M525.36 136.45V138.85M524.16 144.50H526.56M525.36 143.30V145.70M524.16 151.35H526.56M525.36 150.15V152.55M524.16 158.20H526.56M525.36 157.00V159.40M524.16 165.05H526.56M525.36 163.85V166.25M524.16 171.90H526.56M525.36 170.70V173.10M524.16 178.75H526.56M525.36 177.55V179.95M524.16 185.60H526.56M525.36 184.40V186.80M524.16 192.45H526.56M525.36 191.25V193.65" stroke="#222222" stroke-width="1" fill="none"/></svg><div class="fc" style="left:483.72px;top:62.3px;width:27.78px;height:6.87px;background:#22a6e0"></div><div class="fc" style="left:483.72px;top:144.5px;width:27.78px;height:6.87px;background:rgba(44,176,236,0.5)"></div><div class="fc" style="left:462.9px;top:151.35px;width:6.96px;height:6.87px;background:#b4309c"></div><div class="fc" style="left:490.66px;top:151.35px;width:6.96px;height:6.87px;background:#dc1438"></div><div class="fc" style="left:497.6px;top:151.35px;width:20.84px;height:6.87px;background:#1f4fd0"></div><div class="fc" style="left:518.42px;top:151.35px;width:6.96px;height:6.87px;background:#22a6e0"></div><div class="fc" style="left:462.9px;top:158.2px;width:13.9px;height:6.87px;background:#b4309c"></div><div class="fc" style="left:476.78px;top:158.2px;width:20.84px;height:6.87px;background:#dc1438"></div><div class="fc" style="left:497.6px;top:158.2px;width:20.84px;height:6.87px;background:#1f4fd0"></div><div class="fc" style="left:518.42px;top:158.2px;width:6.96px;height:6.87px;background:#22a6e0"></div><div class="fc" style="left:462.9px;top:165.05px;width:6.96px;height:6.87px;background:#b4309c"></div><div class="fc" style="left:469.84px;top:165.05px;width:20.84px;height:6.87px;background:#dc1438"></div><div class="fc" style="left:490.66px;top:165.05px;width:6.96px;height:6.87px;background:#e05a12"></div><div class="fc" style="left:497.6px;top:165.05px;width:6.96px;height:6.87px;background:#1f4fd0"></div><div class="fc" style="left:504.54px;top:165.05px;width:13.9px;height:6.87px;background:#e8a22a"></div><div class="fc" style="left:518.42px;top:165.05px;width:6.96px;height:6.87px;background:#22a6e0"></div><div class="fc" style="left:462.9px;top:171.9px;width:6.96px;height:6.87px;background:#5db22e"></div><div class="fc" style="left:469.84px;top:171.9px;width:6.96px;height:6.87px;background:#dc1438"></div><div class="fc" style="left:476.78px;top:171.9px;width:20.84px;height:6.87px;background:#e05a12"></div><div class="fc" style="left:497.6px;top:171.9px;width:6.96px;height:6.87px;background:#1f4fd0"></div><div class="fc" style="left:504.54px;top:171.9px;width:13.9px;height:6.87px;background:#e8a22a"></div><div class="fc" style="left:518.42px;top:171.9px;width:6.96px;height:6.87px;background:#22a6e0"></div><div class="fc" style="left:462.9px;top:178.75px;width:13.9px;height:6.87px;background:#5db22e"></div><div class="fc" style="left:476.78px;top:178.75px;width:6.96px;height:6.87px;background:#e05a12"></div><div class="fc" style="left:483.72px;top:178.75px;width:13.9px;height:6.87px;background:#e8a22a"></div><div class="fc" style="left:497.6px;top:178.75px;width:27.78px;height:6.87px;background:#1f4fd0"></div><div class="fc" style="left:462.9px;top:185.6px;width:13.9px;height:6.87px;background:#5db22e"></div><div class="fc" style="left:476.78px;top:185.6px;width:6.96px;height:6.87px;background:#e05a12"></div><div class="fc" style="left:483.72px;top:185.6px;width:27.78px;height:6.87px;background:#e8a22a"></div><div class="fc" style="left:511.48px;top:185.6px;width:13.9px;height:6.87px;background:#1f4fd0"></div><div class="fc" style="left:462.9px;top:192.45px;width:13.9px;height:6.87px;background:#5db22e"></div><div class="fc" style="left:476.78px;top:192.45px;width:20.84px;height:6.87px;background:#e05a12"></div><div class="fc" style="left:497.6px;top:192.45px;width:13.9px;height:6.87px;background:#e8a22a"></div><div class="fc" style="left:511.48px;top:192.45px;width:13.9px;height:6.87px;background:#1f4fd0"></div><svg class="box" style="left:0;top:0" width="670" height="500" viewBox="0 0 670 500"><rect x="555.25" y="62.05" width="72.10" height="136.90" rx="1" fill="#151617" stroke="#3a3a3a" stroke-width="1.3"/></svg><svg class="box" style="left:0;top:0" width="670" height="500" viewBox="0 0 670 500"><path d="M562.24 62.90V198.10M569.18 62.90V198.10M576.12 62.90V198.10M583.06 62.90V198.10M590.00 62.90V198.10M596.94 62.90V198.10M603.88 62.90V198.10M610.82 62.90V198.10M617.76 62.90V198.10M555.90 69.15H626.70M555.90 76.00H626.70M555.90 82.85H626.70M555.90 89.70H626.70M555.90 96.55H626.70M555.90 103.40H626.70M555.90 110.25H626.70M555.90 117.10H626.70M555.90 123.95H626.70M555.90 130.80H626.70M555.90 137.65H626.70M555.90 144.50H626.70M555.90 151.35H626.70M555.90 158.20H626.70M555.90 165.05H626.70M555.90 171.90H626.70M555.90 178.75H626.70M555.90 185.60H626.70M555.90 192.45H626.70" stroke="#151617" stroke-width="1" fill="none"/><path d="M561.04 69.15H563.44M562.24 67.95V70.35M561.04 76.00H563.44M562.24 74.80V77.20M561.04 82.85H563.44M562.24 81.65V84.05M561.04 89.70H563.44M562.24 88.50V90.90M561.04 96.55H563.44M562.24 95.35V97.75M561.04 103.40H563.44M562.24 102.20V104.60M561.04 110.25H563.44M562.24 109.05V111.45M561.04 117.10H563.44M562.24 115.90V118.30M561.04 123.95H563.44M562.24 122.75V125.15M561.04 130.80H563.44M562.24 129.60V132.00M561.04 137.65H563.44M562.24 136.45V138.85M561.04 144.50H563.44M562.24 143.30V145.70M561.04 151.35H563.44M562.24 150.15V152.55M561.04 158.20H563.44M562.24 157.00V159.40M561.04 165.05H563.44M562.24 163.85V166.25M561.04 171.90H563.44M562.24 170.70V173.10M561.04 178.75H563.44M562.24 177.55V179.95M561.04 185.60H563.44M562.24 184.40V186.80M561.04 192.45H563.44M562.24 191.25V193.65M567.98 69.15H570.38M569.18 67.95V70.35M567.98 76.00H570.38M569.18 74.80V77.20M567.98 82.85H570.38M569.18 81.65V84.05M567.98 89.70H570.38M569.18 88.50V90.90M567.98 96.55H570.38M569.18 95.35V97.75M567.98 103.40H570.38M569.18 102.20V104.60M567.98 110.25H570.38M569.18 109.05V111.45M567.98 117.10H570.38M569.18 115.90V118.30M567.98 123.95H570.38M569.18 122.75V125.15M567.98 130.80H570.38M569.18 129.60V132.00M567.98 137.65H570.38M569.18 136.45V138.85M567.98 144.50H570.38M569.18 143.30V145.70M567.98 151.35H570.38M569.18 150.15V152.55M567.98 158.20H570.38M569.18 157.00V159.40M567.98 165.05H570.38M569.18 163.85V166.25M567.98 171.90H570.38M569.18 170.70V173.10M567.98 178.75H570.38M569.18 177.55V179.95M567.98 185.60H570.38M569.18 184.40V186.80M567.98 192.45H570.38M569.18 191.25V193.65M574.92 69.15H577.32M576.12 67.95V70.35M574.92 76.00H577.32M576.12 74.80V77.20M574.92 82.85H577.32M576.12 81.65V84.05M574.92 89.70H577.32M576.12 88.50V90.90M574.92 96.55H577.32M576.12 95.35V97.75M574.92 103.40H577.32M576.12 102.20V104.60M574.92 110.25H577.32M576.12 109.05V111.45M574.92 117.10H577.32M576.12 115.90V118.30M574.92 123.95H577.32M576.12 122.75V125.15M574.92 130.80H577.32M576.12 129.60V132.00M574.92 137.65H577.32M576.12 136.45V138.85M574.92 144.50H577.32M576.12 143.30V145.70M574.92 151.35H577.32M576.12 150.15V152.55M574.92 158.20H577.32M576.12 157.00V159.40M574.92 165.05H577.32M576.12 163.85V166.25M574.92 171.90H577.32M576.12 170.70V173.10M574.92 178.75H577.32M576.12 177.55V179.95M574.92 185.60H577.32M576.12 184.40V186.80M574.92 192.45H577.32M576.12 191.25V193.65M581.86 69.15H584.26M583.06 67.95V70.35M581.86 76.00H584.26M583.06 74.80V77.20M581.86 82.85H584.26M583.06 81.65V84.05M581.86 89.70H584.26M583.06 88.50V90.90M581.86 96.55H584.26M583.06 95.35V97.75M581.86 103.40H584.26M583.06 102.20V104.60M581.86 110.25H584.26M583.06 109.05V111.45M581.86 117.10H584.26M583.06 115.90V118.30M581.86 123.95H584.26M583.06 122.75V125.15M581.86 130.80H584.26M583.06 129.60V132.00M581.86 137.65H584.26M583.06 136.45V138.85M581.86 144.50H584.26M583.06 143.30V145.70M581.86 151.35H584.26M583.06 150.15V152.55M581.86 158.20H584.26M583.06 157.00V159.40M581.86 165.05H584.26M583.06 163.85V166.25M581.86 171.90H584.26M583.06 170.70V173.10M581.86 178.75H584.26M583.06 177.55V179.95M581.86 185.60H584.26M583.06 184.40V186.80M581.86 192.45H584.26M583.06 191.25V193.65M588.80 69.15H591.20M590.00 67.95V70.35M588.80 76.00H591.20M590.00 74.80V77.20M588.80 82.85H591.20M590.00 81.65V84.05M588.80 89.70H591.20M590.00 88.50V90.90M588.80 96.55H591.20M590.00 95.35V97.75M588.80 103.40H591.20M590.00 102.20V104.60M588.80 110.25H591.20M590.00 109.05V111.45M588.80 117.10H591.20M590.00 115.90V118.30M588.80 123.95H591.20M590.00 122.75V125.15M588.80 130.80H591.20M590.00 129.60V132.00M588.80 137.65H591.20M590.00 136.45V138.85M588.80 144.50H591.20M590.00 143.30V145.70M588.80 151.35H591.20M590.00 150.15V152.55M588.80 158.20H591.20M590.00 157.00V159.40M588.80 165.05H591.20M590.00 163.85V166.25M588.80 171.90H591.20M590.00 170.70V173.10M588.80 178.75H591.20M590.00 177.55V179.95M588.80 185.60H591.20M590.00 184.40V186.80M588.80 192.45H591.20M590.00 191.25V193.65M595.74 69.15H598.14M596.94 67.95V70.35M595.74 76.00H598.14M596.94 74.80V77.20M595.74 82.85H598.14M596.94 81.65V84.05M595.74 89.70H598.14M596.94 88.50V90.90M595.74 96.55H598.14M596.94 95.35V97.75M595.74 103.40H598.14M596.94 102.20V104.60M595.74 110.25H598.14M596.94 109.05V111.45M595.74 117.10H598.14M596.94 115.90V118.30M595.74 123.95H598.14M596.94 122.75V125.15M595.74 130.80H598.14M596.94 129.60V132.00M595.74 137.65H598.14M596.94 136.45V138.85M595.74 144.50H598.14M596.94 143.30V145.70M595.74 151.35H598.14M596.94 150.15V152.55M595.74 158.20H598.14M596.94 157.00V159.40M595.74 165.05H598.14M596.94 163.85V166.25M595.74 171.90H598.14M596.94 170.70V173.10M595.74 178.75H598.14M596.94 177.55V179.95M595.74 185.60H598.14M596.94 184.40V186.80M595.74 192.45H598.14M596.94 191.25V193.65M602.68 69.15H605.08M603.88 67.95V70.35M602.68 76.00H605.08M603.88 74.80V77.20M602.68 82.85H605.08M603.88 81.65V84.05M602.68 89.70H605.08M603.88 88.50V90.90M602.68 96.55H605.08M603.88 95.35V97.75M602.68 103.40H605.08M603.88 102.20V104.60M602.68 110.25H605.08M603.88 109.05V111.45M602.68 117.10H605.08M603.88 115.90V118.30M602.68 123.95H605.08M603.88 122.75V125.15M602.68 130.80H605.08M603.88 129.60V132.00M602.68 137.65H605.08M603.88 136.45V138.85M602.68 144.50H605.08M603.88 143.30V145.70M602.68 151.35H605.08M603.88 150.15V152.55M602.68 158.20H605.08M603.88 157.00V159.40M602.68 165.05H605.08M603.88 163.85V166.25M602.68 171.90H605.08M603.88 170.70V173.10M602.68 178.75H605.08M603.88 177.55V179.95M602.68 185.60H605.08M603.88 184.40V186.80M602.68 192.45H605.08M603.88 191.25V193.65M609.62 69.15H612.02M610.82 67.95V70.35M609.62 76.00H612.02M610.82 74.80V77.20M609.62 82.85H612.02M610.82 81.65V84.05M609.62 89.70H612.02M610.82 88.50V90.90M609.62 96.55H612.02M610.82 95.35V97.75M609.62 103.40H612.02M610.82 102.20V104.60M609.62 110.25H612.02M610.82 109.05V111.45M609.62 117.10H612.02M610.82 115.90V118.30M609.62 123.95H612.02M610.82 122.75V125.15M609.62 130.80H612.02M610.82 129.60V132.00M609.62 137.65H612.02M610.82 136.45V138.85M609.62 144.50H612.02M610.82 143.30V145.70M609.62 151.35H612.02M610.82 150.15V152.55M609.62 158.20H612.02M610.82 157.00V159.40M609.62 165.05H612.02M610.82 163.85V166.25M609.62 171.90H612.02M610.82 170.70V173.10M609.62 178.75H612.02M610.82 177.55V179.95M609.62 185.60H612.02M610.82 184.40V186.80M609.62 192.45H612.02M610.82 191.25V193.65M616.56 69.15H618.96M617.76 67.95V70.35M616.56 76.00H618.96M617.76 74.80V77.20M616.56 82.85H618.96M617.76 81.65V84.05M616.56 89.70H618.96M617.76 88.50V90.90M616.56 96.55H618.96M617.76 95.35V97.75M616.56 103.40H618.96M617.76 102.20V104.60M616.56 110.25H618.96M617.76 109.05V111.45M616.56 117.10H618.96M617.76 115.90V118.30M616.56 123.95H618.96M617.76 122.75V125.15M616.56 130.80H618.96M617.76 129.60V132.00M616.56 137.65H618.96M617.76 136.45V138.85M616.56 144.50H618.96M617.76 143.30V145.70M616.56 151.35H618.96M617.76 150.15V152.55M616.56 158.20H618.96M617.76 157.00V159.40M616.56 165.05H618.96M617.76 163.85V166.25M616.56 171.90H618.96M617.76 170.70V173.10M616.56 178.75H618.96M617.76 177.55V179.95M616.56 185.60H618.96M617.76 184.40V186.80M616.56 192.45H618.96M617.76 191.25V193.65" stroke="#1f2021" stroke-width="1" fill="none"/></svg><div class="fc" style="left:576.12px;top:62.3px;width:20.84px;height:6.87px;background:#b4309c"></div><div class="fc" style="left:583.06px;top:185.6px;width:6.96px;height:6.87px;background:#6b1f5c"></div><div class="fc" style="left:576.12px;top:192.45px;width:20.84px;height:6.87px;background:#6b1f5c"></div><div class="box" style="left:555.9px;top:151px;width:70.8px;height:23.8px;background:rgba(0,0,0,0.45)"></div><svg class="box" style="left:0;top:0" width="670" height="500" viewBox="0 0 670 500"><rect x="370.45" y="218.15" width="72.10" height="136.90" rx="1" fill="#000" stroke="#363636" stroke-width="1.3"/></svg><svg class="box" style="left:0;top:0" width="670" height="500" viewBox="0 0 670 500"><path d="M377.44 219.00V354.20M384.38 219.00V354.20M391.32 219.00V354.20M398.26 219.00V354.20M405.20 219.00V354.20M412.14 219.00V354.20M419.08 219.00V354.20M426.02 219.00V354.20M432.96 219.00V354.20M371.10 225.25H441.90M371.10 232.10H441.90M371.10 238.95H441.90M371.10 245.80H441.90M371.10 252.65H441.90M371.10 259.50H441.90M371.10 266.35H441.90M371.10 273.20H441.90M371.10 280.05H441.90M371.10 286.90H441.90M371.10 293.75H441.90M371.10 300.60H441.90M371.10 307.45H441.90M371.10 314.30H441.90M371.10 321.15H441.90M371.10 328.00H441.90M371.10 334.85H441.90M371.10 341.70H441.90M371.10 348.55H441.90" stroke="#121212" stroke-width="1" fill="none"/><path d="M376.24 225.25H378.64M377.44 224.05V226.45M376.24 232.10H378.64M377.44 230.90V233.30M376.24 238.95H378.64M377.44 237.75V240.15M376.24 245.80H378.64M377.44 244.60V247.00M376.24 252.65H378.64M377.44 251.45V253.85M376.24 259.50H378.64M377.44 258.30V260.70M376.24 266.35H378.64M377.44 265.15V267.55M376.24 273.20H378.64M377.44 272.00V274.40M376.24 280.05H378.64M377.44 278.85V281.25M376.24 286.90H378.64M377.44 285.70V288.10M376.24 293.75H378.64M377.44 292.55V294.95M376.24 300.60H378.64M377.44 299.40V301.80M376.24 307.45H378.64M377.44 306.25V308.65M376.24 314.30H378.64M377.44 313.10V315.50M376.24 321.15H378.64M377.44 319.95V322.35M376.24 328.00H378.64M377.44 326.80V329.20M376.24 334.85H378.64M377.44 333.65V336.05M376.24 341.70H378.64M377.44 340.50V342.90M376.24 348.55H378.64M377.44 347.35V349.75M383.18 225.25H385.58M384.38 224.05V226.45M383.18 232.10H385.58M384.38 230.90V233.30M383.18 238.95H385.58M384.38 237.75V240.15M383.18 245.80H385.58M384.38 244.60V247.00M383.18 252.65H385.58M384.38 251.45V253.85M383.18 259.50H385.58M384.38 258.30V260.70M383.18 266.35H385.58M384.38 265.15V267.55M383.18 273.20H385.58M384.38 272.00V274.40M383.18 280.05H385.58M384.38 278.85V281.25M383.18 286.90H385.58M384.38 285.70V288.10M383.18 293.75H385.58M384.38 292.55V294.95M383.18 300.60H385.58M384.38 299.40V301.80M383.18 307.45H385.58M384.38 306.25V308.65M383.18 314.30H385.58M384.38 313.10V315.50M383.18 321.15H385.58M384.38 319.95V322.35M383.18 328.00H385.58M384.38 326.80V329.20M383.18 334.85H385.58M384.38 333.65V336.05M383.18 341.70H385.58M384.38 340.50V342.90M383.18 348.55H385.58M384.38 347.35V349.75M390.12 225.25H392.52M391.32 224.05V226.45M390.12 232.10H392.52M391.32 230.90V233.30M390.12 238.95H392.52M391.32 237.75V240.15M390.12 245.80H392.52M391.32 244.60V247.00M390.12 252.65H392.52M391.32 251.45V253.85M390.12 259.50H392.52M391.32 258.30V260.70M390.12 266.35H392.52M391.32 265.15V267.55M390.12 273.20H392.52M391.32 272.00V274.40M390.12 280.05H392.52M391.32 278.85V281.25M390.12 286.90H392.52M391.32 285.70V288.10M390.12 293.75H392.52M391.32 292.55V294.95M390.12 300.60H392.52M391.32 299.40V301.80M390.12 307.45H392.52M391.32 306.25V308.65M390.12 314.30H392.52M391.32 313.10V315.50M390.12 321.15H392.52M391.32 319.95V322.35M390.12 328.00H392.52M391.32 326.80V329.20M390.12 334.85H392.52M391.32 333.65V336.05M390.12 341.70H392.52M391.32 340.50V342.90M390.12 348.55H392.52M391.32 347.35V349.75M397.06 225.25H399.46M398.26 224.05V226.45M397.06 232.10H399.46M398.26 230.90V233.30M397.06 238.95H399.46M398.26 237.75V240.15M397.06 245.80H399.46M398.26 244.60V247.00M397.06 252.65H399.46M398.26 251.45V253.85M397.06 259.50H399.46M398.26 258.30V260.70M397.06 266.35H399.46M398.26 265.15V267.55M397.06 273.20H399.46M398.26 272.00V274.40M397.06 280.05H399.46M398.26 278.85V281.25M397.06 286.90H399.46M398.26 285.70V288.10M397.06 293.75H399.46M398.26 292.55V294.95M397.06 300.60H399.46M398.26 299.40V301.80M397.06 307.45H399.46M398.26 306.25V308.65M397.06 314.30H399.46M398.26 313.10V315.50M397.06 321.15H399.46M398.26 319.95V322.35M397.06 328.00H399.46M398.26 326.80V329.20M397.06 334.85H399.46M398.26 333.65V336.05M397.06 341.70H399.46M398.26 340.50V342.90M397.06 348.55H399.46M398.26 347.35V349.75M404.00 225.25H406.40M405.20 224.05V226.45M404.00 232.10H406.40M405.20 230.90V233.30M404.00 238.95H406.40M405.20 237.75V240.15M404.00 245.80H406.40M405.20 244.60V247.00M404.00 252.65H406.40M405.20 251.45V253.85M404.00 259.50H406.40M405.20 258.30V260.70M404.00 266.35H406.40M405.20 265.15V267.55M404.00 273.20H406.40M405.20 272.00V274.40M404.00 280.05H406.40M405.20 278.85V281.25M404.00 286.90H406.40M405.20 285.70V288.10M404.00 293.75H406.40M405.20 292.55V294.95M404.00 300.60H406.40M405.20 299.40V301.80M404.00 307.45H406.40M405.20 306.25V308.65M404.00 314.30H406.40M405.20 313.10V315.50M404.00 321.15H406.40M405.20 319.95V322.35M404.00 328.00H406.40M405.20 326.80V329.20M404.00 334.85H406.40M405.20 333.65V336.05M404.00 341.70H406.40M405.20 340.50V342.90M404.00 348.55H406.40M405.20 347.35V349.75M410.94 225.25H413.34M412.14 224.05V226.45M410.94 232.10H413.34M412.14 230.90V233.30M410.94 238.95H413.34M412.14 237.75V240.15M410.94 245.80H413.34M412.14 244.60V247.00M410.94 252.65H413.34M412.14 251.45V253.85M410.94 259.50H413.34M412.14 258.30V260.70M410.94 266.35H413.34M412.14 265.15V267.55M410.94 273.20H413.34M412.14 272.00V274.40M410.94 280.05H413.34M412.14 278.85V281.25M410.94 286.90H413.34M412.14 285.70V288.10M410.94 293.75H413.34M412.14 292.55V294.95M410.94 300.60H413.34M412.14 299.40V301.80M410.94 307.45H413.34M412.14 306.25V308.65M410.94 314.30H413.34M412.14 313.10V315.50M410.94 321.15H413.34M412.14 319.95V322.35M410.94 328.00H413.34M412.14 326.80V329.20M410.94 334.85H413.34M412.14 333.65V336.05M410.94 341.70H413.34M412.14 340.50V342.90M410.94 348.55H413.34M412.14 347.35V349.75M417.88 225.25H420.28M419.08 224.05V226.45M417.88 232.10H420.28M419.08 230.90V233.30M417.88 238.95H420.28M419.08 237.75V240.15M417.88 245.80H420.28M419.08 244.60V247.00M417.88 252.65H420.28M419.08 251.45V253.85M417.88 259.50H420.28M419.08 258.30V260.70M417.88 266.35H420.28M419.08 265.15V267.55M417.88 273.20H420.28M419.08 272.00V274.40M417.88 280.05H420.28M419.08 278.85V281.25M417.88 286.90H420.28M419.08 285.70V288.10M417.88 293.75H420.28M419.08 292.55V294.95M417.88 300.60H420.28M419.08 299.40V301.80M417.88 307.45H420.28M419.08 306.25V308.65M417.88 314.30H420.28M419.08 313.10V315.50M417.88 321.15H420.28M419.08 319.95V322.35M417.88 328.00H420.28M419.08 326.80V329.20M417.88 334.85H420.28M419.08 333.65V336.05M417.88 341.70H420.28M419.08 340.50V342.90M417.88 348.55H420.28M419.08 347.35V349.75M424.82 225.25H427.22M426.02 224.05V226.45M424.82 232.10H427.22M426.02 230.90V233.30M424.82 238.95H427.22M426.02 237.75V240.15M424.82 245.80H427.22M426.02 244.60V247.00M424.82 252.65H427.22M426.02 251.45V253.85M424.82 259.50H427.22M426.02 258.30V260.70M424.82 266.35H427.22M426.02 265.15V267.55M424.82 273.20H427.22M426.02 272.00V274.40M424.82 280.05H427.22M426.02 278.85V281.25M424.82 286.90H427.22M426.02 285.70V288.10M424.82 293.75H427.22M426.02 292.55V294.95M424.82 300.60H427.22M426.02 299.40V301.80M424.82 307.45H427.22M426.02 306.25V308.65M424.82 314.30H427.22M426.02 313.10V315.50M424.82 321.15H427.22M426.02 319.95V322.35M424.82 328.00H427.22M426.02 326.80V329.20M424.82 334.85H427.22M426.02 333.65V336.05M424.82 341.70H427.22M426.02 340.50V342.90M424.82 348.55H427.22M426.02 347.35V349.75M431.76 225.25H434.16M432.96 224.05V226.45M431.76 232.10H434.16M432.96 230.90V233.30M431.76 238.95H434.16M432.96 237.75V240.15M431.76 245.80H434.16M432.96 244.60V247.00M431.76 252.65H434.16M432.96 251.45V253.85M431.76 259.50H434.16M432.96 258.30V260.70M431.76 266.35H434.16M432.96 265.15V267.55M431.76 273.20H434.16M432.96 272.00V274.40M431.76 280.05H434.16M432.96 278.85V281.25M431.76 286.90H434.16M432.96 285.70V288.10M431.76 293.75H434.16M432.96 292.55V294.95M431.76 300.60H434.16M432.96 299.40V301.80M431.76 307.45H434.16M432.96 306.25V308.65M431.76 314.30H434.16M432.96 313.10V315.50M431.76 321.15H434.16M432.96 319.95V322.35M431.76 328.00H434.16M432.96 326.80V329.20M431.76 334.85H434.16M432.96 333.65V336.05M431.76 341.70H434.16M432.96 340.50V342.90M431.76 348.55H434.16M432.96 347.35V349.75" stroke="#222222" stroke-width="1" fill="none"/></svg><div class="fc" style="left:419.08px;top:218.4px;width:20.84px;height:6.87px;background:#b4309c"></div><div class="fc" style="left:426.02px;top:225.25px;width:6.96px;height:6.87px;background:#b4309c"></div><div class="fc" style="left:398.26px;top:286.9px;width:13.9px;height:6.87px;background:#e05a12"></div><div class="fc" style="left:419.08px;top:286.9px;width:20.84px;height:6.87px;background:#5e1a4e"></div><div class="fc" style="left:398.26px;top:293.75px;width:13.9px;height:6.87px;background:#e05a12"></div><div class="fc" style="left:412.14px;top:293.75px;width:6.96px;height:6.87px;background:#b4309c"></div><div class="fc" style="left:426.02px;top:293.75px;width:6.96px;height:6.87px;background:#5e1a4e"></div><div class="fc" style="left:432.96px;top:293.75px;width:6.96px;height:6.87px;background:#1f4fd0"></div><div class="fc" style="left:398.26px;top:300.6px;width:13.9px;height:6.87px;background:#e05a12"></div><div class="fc" style="left:412.14px;top:300.6px;width:13.9px;height:6.87px;background:#b4309c"></div><div class="fc" style="left:432.96px;top:300.6px;width:6.96px;height:6.87px;background:#1f4fd0"></div><div class="fc" style="left:398.26px;top:307.45px;width:13.9px;height:6.87px;background:#e05a12"></div><div class="fc" style="left:412.14px;top:307.45px;width:6.96px;height:6.87px;background:#b4309c"></div><div class="fc" style="left:419.08px;top:307.45px;width:6.96px;height:6.87px;background:#dc1438"></div><div class="fc" style="left:426.02px;top:307.45px;width:13.9px;height:6.87px;background:#1f4fd0"></div><div class="fc" style="left:384.38px;top:314.3px;width:6.96px;height:6.87px;background:#5db22e"></div><div class="fc" style="left:398.26px;top:314.3px;width:13.9px;height:6.87px;background:#e8a22a"></div><div class="fc" style="left:412.14px;top:314.3px;width:13.9px;height:6.87px;background:#dc1438"></div><div class="fc" style="left:426.02px;top:314.3px;width:13.9px;height:6.87px;background:#5db22e"></div><div class="fc" style="left:384.38px;top:321.15px;width:13.9px;height:6.87px;background:#5db22e"></div><div class="fc" style="left:398.26px;top:321.15px;width:13.9px;height:6.87px;background:#e8a22a"></div><div class="fc" style="left:412.14px;top:321.15px;width:6.96px;height:6.87px;background:#dc1438"></div><div class="fc" style="left:419.08px;top:321.15px;width:13.9px;height:6.87px;background:#5db22e"></div><div class="fc" style="left:432.96px;top:321.15px;width:6.96px;height:6.87px;background:#22a6e0"></div><div class="fc" style="left:377.44px;top:328px;width:13.9px;height:6.87px;background:#22a6e0"></div><div class="fc" style="left:391.32px;top:328px;width:20.84px;height:6.87px;background:#5db22e"></div><div class="fc" style="left:412.14px;top:328px;width:13.9px;height:6.87px;background:#1f4fd0"></div><div class="fc" style="left:426.02px;top:328px;width:6.96px;height:6.87px;background:#dc1438"></div><div class="fc" style="left:432.96px;top:328px;width:6.96px;height:6.87px;background:#22a6e0"></div><div class="fc" style="left:377.44px;top:334.85px;width:13.9px;height:6.87px;background:#22a6e0"></div><div class="fc" style="left:391.32px;top:334.85px;width:13.9px;height:6.87px;background:#5db22e"></div><div class="fc" style="left:405.2px;top:334.85px;width:6.96px;height:6.87px;background:#e05a12"></div><div class="fc" style="left:412.14px;top:334.85px;width:6.96px;height:6.87px;background:#1f4fd0"></div><div class="fc" style="left:419.08px;top:334.85px;width:13.9px;height:6.87px;background:#dc1438"></div><div class="fc" style="left:432.96px;top:334.85px;width:6.96px;height:6.87px;background:#22a6e0"></div><div class="fc" style="left:377.44px;top:341.7px;width:13.9px;height:6.87px;background:#22a6e0"></div><div class="fc" style="left:391.32px;top:341.7px;width:13.9px;height:6.87px;background:#e8a22a"></div><div class="fc" style="left:405.2px;top:341.7px;width:6.96px;height:6.87px;background:#e05a12"></div><div class="fc" style="left:412.14px;top:341.7px;width:6.96px;height:6.87px;background:#1f4fd0"></div><div class="fc" style="left:419.08px;top:341.7px;width:6.96px;height:6.87px;background:#dc1438"></div><div class="fc" style="left:426.02px;top:341.7px;width:6.96px;height:6.87px;background:#b4309c"></div><div class="fc" style="left:432.96px;top:341.7px;width:6.96px;height:6.87px;background:#22a6e0"></div><div class="fc" style="left:377.44px;top:348.55px;width:13.9px;height:6.87px;background:#22a6e0"></div><div class="fc" style="left:391.32px;top:348.55px;width:13.9px;height:6.87px;background:#e8a22a"></div><div class="fc" style="left:405.2px;top:348.55px;width:13.9px;height:6.87px;background:#e05a12"></div><div class="fc" style="left:419.08px;top:348.55px;width:20.84px;height:6.87px;background:#b4309c"></div><svg class="box" style="left:0;top:0" width="670" height="500" viewBox="0 0 670 500"><rect x="462.85" y="218.15" width="72.10" height="136.90" rx="1" fill="#151617" stroke="#3a3a3a" stroke-width="1.3"/></svg><svg class="box" style="left:0;top:0" width="670" height="500" viewBox="0 0 670 500"><path d="M469.84 219.00V354.20M476.78 219.00V354.20M483.72 219.00V354.20M490.66 219.00V354.20M497.60 219.00V354.20M504.54 219.00V354.20M511.48 219.00V354.20M518.42 219.00V354.20M525.36 219.00V354.20M463.50 225.25H534.30M463.50 232.10H534.30M463.50 238.95H534.30M463.50 245.80H534.30M463.50 252.65H534.30M463.50 259.50H534.30M463.50 266.35H534.30M463.50 273.20H534.30M463.50 280.05H534.30M463.50 286.90H534.30M463.50 293.75H534.30M463.50 300.60H534.30M463.50 307.45H534.30M463.50 314.30H534.30M463.50 321.15H534.30M463.50 328.00H534.30M463.50 334.85H534.30M463.50 341.70H534.30M463.50 348.55H534.30" stroke="#151617" stroke-width="1" fill="none"/><path d="M468.64 225.25H471.04M469.84 224.05V226.45M468.64 232.10H471.04M469.84 230.90V233.30M468.64 238.95H471.04M469.84 237.75V240.15M468.64 245.80H471.04M469.84 244.60V247.00M468.64 252.65H471.04M469.84 251.45V253.85M468.64 259.50H471.04M469.84 258.30V260.70M468.64 266.35H471.04M469.84 265.15V267.55M468.64 273.20H471.04M469.84 272.00V274.40M468.64 280.05H471.04M469.84 278.85V281.25M468.64 286.90H471.04M469.84 285.70V288.10M468.64 293.75H471.04M469.84 292.55V294.95M468.64 300.60H471.04M469.84 299.40V301.80M468.64 307.45H471.04M469.84 306.25V308.65M468.64 314.30H471.04M469.84 313.10V315.50M468.64 321.15H471.04M469.84 319.95V322.35M468.64 328.00H471.04M469.84 326.80V329.20M468.64 334.85H471.04M469.84 333.65V336.05M468.64 341.70H471.04M469.84 340.50V342.90M468.64 348.55H471.04M469.84 347.35V349.75M475.58 225.25H477.98M476.78 224.05V226.45M475.58 232.10H477.98M476.78 230.90V233.30M475.58 238.95H477.98M476.78 237.75V240.15M475.58 245.80H477.98M476.78 244.60V247.00M475.58 252.65H477.98M476.78 251.45V253.85M475.58 259.50H477.98M476.78 258.30V260.70M475.58 266.35H477.98M476.78 265.15V267.55M475.58 273.20H477.98M476.78 272.00V274.40M475.58 280.05H477.98M476.78 278.85V281.25M475.58 286.90H477.98M476.78 285.70V288.10M475.58 293.75H477.98M476.78 292.55V294.95M475.58 300.60H477.98M476.78 299.40V301.80M475.58 307.45H477.98M476.78 306.25V308.65M475.58 314.30H477.98M476.78 313.10V315.50M475.58 321.15H477.98M476.78 319.95V322.35M475.58 328.00H477.98M476.78 326.80V329.20M475.58 334.85H477.98M476.78 333.65V336.05M475.58 341.70H477.98M476.78 340.50V342.90M475.58 348.55H477.98M476.78 347.35V349.75M482.52 225.25H484.92M483.72 224.05V226.45M482.52 232.10H484.92M483.72 230.90V233.30M482.52 238.95H484.92M483.72 237.75V240.15M482.52 245.80H484.92M483.72 244.60V247.00M482.52 252.65H484.92M483.72 251.45V253.85M482.52 259.50H484.92M483.72 258.30V260.70M482.52 266.35H484.92M483.72 265.15V267.55M482.52 273.20H484.92M483.72 272.00V274.40M482.52 280.05H484.92M483.72 278.85V281.25M482.52 286.90H484.92M483.72 285.70V288.10M482.52 293.75H484.92M483.72 292.55V294.95M482.52 300.60H484.92M483.72 299.40V301.80M482.52 307.45H484.92M483.72 306.25V308.65M482.52 314.30H484.92M483.72 313.10V315.50M482.52 321.15H484.92M483.72 319.95V322.35M482.52 328.00H484.92M483.72 326.80V329.20M482.52 334.85H484.92M483.72 333.65V336.05M482.52 341.70H484.92M483.72 340.50V342.90M482.52 348.55H484.92M483.72 347.35V349.75M489.46 225.25H491.86M490.66 224.05V226.45M489.46 232.10H491.86M490.66 230.90V233.30M489.46 238.95H491.86M490.66 237.75V240.15M489.46 245.80H491.86M490.66 244.60V247.00M489.46 252.65H491.86M490.66 251.45V253.85M489.46 259.50H491.86M490.66 258.30V260.70M489.46 266.35H491.86M490.66 265.15V267.55M489.46 273.20H491.86M490.66 272.00V274.40M489.46 280.05H491.86M490.66 278.85V281.25M489.46 286.90H491.86M490.66 285.70V288.10M489.46 293.75H491.86M490.66 292.55V294.95M489.46 300.60H491.86M490.66 299.40V301.80M489.46 307.45H491.86M490.66 306.25V308.65M489.46 314.30H491.86M490.66 313.10V315.50M489.46 321.15H491.86M490.66 319.95V322.35M489.46 328.00H491.86M490.66 326.80V329.20M489.46 334.85H491.86M490.66 333.65V336.05M489.46 341.70H491.86M490.66 340.50V342.90M489.46 348.55H491.86M490.66 347.35V349.75M496.40 225.25H498.80M497.60 224.05V226.45M496.40 232.10H498.80M497.60 230.90V233.30M496.40 238.95H498.80M497.60 237.75V240.15M496.40 245.80H498.80M497.60 244.60V247.00M496.40 252.65H498.80M497.60 251.45V253.85M496.40 259.50H498.80M497.60 258.30V260.70M496.40 266.35H498.80M497.60 265.15V267.55M496.40 273.20H498.80M497.60 272.00V274.40M496.40 280.05H498.80M497.60 278.85V281.25M496.40 286.90H498.80M497.60 285.70V288.10M496.40 293.75H498.80M497.60 292.55V294.95M496.40 300.60H498.80M497.60 299.40V301.80M496.40 307.45H498.80M497.60 306.25V308.65M496.40 314.30H498.80M497.60 313.10V315.50M496.40 321.15H498.80M497.60 319.95V322.35M496.40 328.00H498.80M497.60 326.80V329.20M496.40 334.85H498.80M497.60 333.65V336.05M496.40 341.70H498.80M497.60 340.50V342.90M496.40 348.55H498.80M497.60 347.35V349.75M503.34 225.25H505.74M504.54 224.05V226.45M503.34 232.10H505.74M504.54 230.90V233.30M503.34 238.95H505.74M504.54 237.75V240.15M503.34 245.80H505.74M504.54 244.60V247.00M503.34 252.65H505.74M504.54 251.45V253.85M503.34 259.50H505.74M504.54 258.30V260.70M503.34 266.35H505.74M504.54 265.15V267.55M503.34 273.20H505.74M504.54 272.00V274.40M503.34 280.05H505.74M504.54 278.85V281.25M503.34 286.90H505.74M504.54 285.70V288.10M503.34 293.75H505.74M504.54 292.55V294.95M503.34 300.60H505.74M504.54 299.40V301.80M503.34 307.45H505.74M504.54 306.25V308.65M503.34 314.30H505.74M504.54 313.10V315.50M503.34 321.15H505.74M504.54 319.95V322.35M503.34 328.00H505.74M504.54 326.80V329.20M503.34 334.85H505.74M504.54 333.65V336.05M503.34 341.70H505.74M504.54 340.50V342.90M503.34 348.55H505.74M504.54 347.35V349.75M510.28 225.25H512.68M511.48 224.05V226.45M510.28 232.10H512.68M511.48 230.90V233.30M510.28 238.95H512.68M511.48 237.75V240.15M510.28 245.80H512.68M511.48 244.60V247.00M510.28 252.65H512.68M511.48 251.45V253.85M510.28 259.50H512.68M511.48 258.30V260.70M510.28 266.35H512.68M511.48 265.15V267.55M510.28 273.20H512.68M511.48 272.00V274.40M510.28 280.05H512.68M511.48 278.85V281.25M510.28 286.90H512.68M511.48 285.70V288.10M510.28 293.75H512.68M511.48 292.55V294.95M510.28 300.60H512.68M511.48 299.40V301.80M510.28 307.45H512.68M511.48 306.25V308.65M510.28 314.30H512.68M511.48 313.10V315.50M510.28 321.15H512.68M511.48 319.95V322.35M510.28 328.00H512.68M511.48 326.80V329.20M510.28 334.85H512.68M511.48 333.65V336.05M510.28 341.70H512.68M511.48 340.50V342.90M510.28 348.55H512.68M511.48 347.35V349.75M517.22 225.25H519.62M518.42 224.05V226.45M517.22 232.10H519.62M518.42 230.90V233.30M517.22 238.95H519.62M518.42 237.75V240.15M517.22 245.80H519.62M518.42 244.60V247.00M517.22 252.65H519.62M518.42 251.45V253.85M517.22 259.50H519.62M518.42 258.30V260.70M517.22 266.35H519.62M518.42 265.15V267.55M517.22 273.20H519.62M518.42 272.00V274.40M517.22 280.05H519.62M518.42 278.85V281.25M517.22 286.90H519.62M518.42 285.70V288.10M517.22 293.75H519.62M518.42 292.55V294.95M517.22 300.60H519.62M518.42 299.40V301.80M517.22 307.45H519.62M518.42 306.25V308.65M517.22 314.30H519.62M518.42 313.10V315.50M517.22 321.15H519.62M518.42 319.95V322.35M517.22 328.00H519.62M518.42 326.80V329.20M517.22 334.85H519.62M518.42 333.65V336.05M517.22 341.70H519.62M518.42 340.50V342.90M517.22 348.55H519.62M518.42 347.35V349.75M524.16 225.25H526.56M525.36 224.05V226.45M524.16 232.10H526.56M525.36 230.90V233.30M524.16 238.95H526.56M525.36 237.75V240.15M524.16 245.80H526.56M525.36 244.60V247.00M524.16 252.65H526.56M525.36 251.45V253.85M524.16 259.50H526.56M525.36 258.30V260.70M524.16 266.35H526.56M525.36 265.15V267.55M524.16 273.20H526.56M525.36 272.00V274.40M524.16 280.05H526.56M525.36 278.85V281.25M524.16 286.90H526.56M525.36 285.70V288.10M524.16 293.75H526.56M525.36 292.55V294.95M524.16 300.60H526.56M525.36 299.40V301.80M524.16 307.45H526.56M525.36 306.25V308.65M524.16 314.30H526.56M525.36 313.10V315.50M524.16 321.15H526.56M525.36 319.95V322.35M524.16 328.00H526.56M525.36 326.80V329.20M524.16 334.85H526.56M525.36 333.65V336.05M524.16 341.70H526.56M525.36 340.50V342.90M524.16 348.55H526.56M525.36 347.35V349.75" stroke="#1f2021" stroke-width="1" fill="none"/></svg><div class="fc" style="left:483.72px;top:218.4px;width:20.84px;height:6.87px;background:#b4309c"></div><div class="fc" style="left:490.66px;top:341.7px;width:6.96px;height:6.87px;background:#6b1f5c"></div><div class="fc" style="left:483.72px;top:348.55px;width:20.84px;height:6.87px;background:#6b1f5c"></div><div class="box" style="left:463.5px;top:307px;width:70.8px;height:23.8px;background:rgba(0,0,0,0.45)"></div><svg class="box" style="left:0;top:0" width="670" height="500" viewBox="0 0 670 500"><rect x="555.25" y="218.15" width="72.10" height="136.90" rx="1" fill="#000" stroke="#3a3a3a" stroke-width="1.3"/></svg><svg class="box" style="left:0;top:0" width="670" height="500" viewBox="0 0 670 500"><path d="M562.24 219.00V354.20M569.18 219.00V354.20M576.12 219.00V354.20M583.06 219.00V354.20M590.00 219.00V354.20M596.94 219.00V354.20M603.88 219.00V354.20M610.82 219.00V354.20M617.76 219.00V354.20M555.90 225.25H626.70M555.90 232.10H626.70M555.90 238.95H626.70M555.90 245.80H626.70M555.90 252.65H626.70M555.90 259.50H626.70M555.90 266.35H626.70M555.90 273.20H626.70M555.90 280.05H626.70M555.90 286.90H626.70M555.90 293.75H626.70M555.90 300.60H626.70M555.90 307.45H626.70M555.90 314.30H626.70M555.90 321.15H626.70M555.90 328.00H626.70M555.90 334.85H626.70M555.90 341.70H626.70M555.90 348.55H626.70" stroke="#161616" stroke-width="1" fill="none"/><path d="M561.04 225.25H563.44M562.24 224.05V226.45M561.04 232.10H563.44M562.24 230.90V233.30M561.04 238.95H563.44M562.24 237.75V240.15M561.04 245.80H563.44M562.24 244.60V247.00M561.04 252.65H563.44M562.24 251.45V253.85M561.04 259.50H563.44M562.24 258.30V260.70M561.04 266.35H563.44M562.24 265.15V267.55M561.04 273.20H563.44M562.24 272.00V274.40M561.04 280.05H563.44M562.24 278.85V281.25M561.04 286.90H563.44M562.24 285.70V288.10M561.04 293.75H563.44M562.24 292.55V294.95M561.04 300.60H563.44M562.24 299.40V301.80M561.04 307.45H563.44M562.24 306.25V308.65M561.04 314.30H563.44M562.24 313.10V315.50M561.04 321.15H563.44M562.24 319.95V322.35M561.04 328.00H563.44M562.24 326.80V329.20M561.04 334.85H563.44M562.24 333.65V336.05M561.04 341.70H563.44M562.24 340.50V342.90M561.04 348.55H563.44M562.24 347.35V349.75M567.98 225.25H570.38M569.18 224.05V226.45M567.98 232.10H570.38M569.18 230.90V233.30M567.98 238.95H570.38M569.18 237.75V240.15M567.98 245.80H570.38M569.18 244.60V247.00M567.98 252.65H570.38M569.18 251.45V253.85M567.98 259.50H570.38M569.18 258.30V260.70M567.98 266.35H570.38M569.18 265.15V267.55M567.98 273.20H570.38M569.18 272.00V274.40M567.98 280.05H570.38M569.18 278.85V281.25M567.98 286.90H570.38M569.18 285.70V288.10M567.98 293.75H570.38M569.18 292.55V294.95M567.98 300.60H570.38M569.18 299.40V301.80M567.98 307.45H570.38M569.18 306.25V308.65M567.98 314.30H570.38M569.18 313.10V315.50M567.98 321.15H570.38M569.18 319.95V322.35M567.98 328.00H570.38M569.18 326.80V329.20M567.98 334.85H570.38M569.18 333.65V336.05M567.98 341.70H570.38M569.18 340.50V342.90M567.98 348.55H570.38M569.18 347.35V349.75M574.92 225.25H577.32M576.12 224.05V226.45M574.92 232.10H577.32M576.12 230.90V233.30M574.92 238.95H577.32M576.12 237.75V240.15M574.92 245.80H577.32M576.12 244.60V247.00M574.92 252.65H577.32M576.12 251.45V253.85M574.92 259.50H577.32M576.12 258.30V260.70M574.92 266.35H577.32M576.12 265.15V267.55M574.92 273.20H577.32M576.12 272.00V274.40M574.92 280.05H577.32M576.12 278.85V281.25M574.92 286.90H577.32M576.12 285.70V288.10M574.92 293.75H577.32M576.12 292.55V294.95M574.92 300.60H577.32M576.12 299.40V301.80M574.92 307.45H577.32M576.12 306.25V308.65M574.92 314.30H577.32M576.12 313.10V315.50M574.92 321.15H577.32M576.12 319.95V322.35M574.92 328.00H577.32M576.12 326.80V329.20M574.92 334.85H577.32M576.12 333.65V336.05M574.92 341.70H577.32M576.12 340.50V342.90M574.92 348.55H577.32M576.12 347.35V349.75M581.86 225.25H584.26M583.06 224.05V226.45M581.86 232.10H584.26M583.06 230.90V233.30M581.86 238.95H584.26M583.06 237.75V240.15M581.86 245.80H584.26M583.06 244.60V247.00M581.86 252.65H584.26M583.06 251.45V253.85M581.86 259.50H584.26M583.06 258.30V260.70M581.86 266.35H584.26M583.06 265.15V267.55M581.86 273.20H584.26M583.06 272.00V274.40M581.86 280.05H584.26M583.06 278.85V281.25M581.86 286.90H584.26M583.06 285.70V288.10M581.86 293.75H584.26M583.06 292.55V294.95M581.86 300.60H584.26M583.06 299.40V301.80M581.86 307.45H584.26M583.06 306.25V308.65M581.86 314.30H584.26M583.06 313.10V315.50M581.86 321.15H584.26M583.06 319.95V322.35M581.86 328.00H584.26M583.06 326.80V329.20M581.86 334.85H584.26M583.06 333.65V336.05M581.86 341.70H584.26M583.06 340.50V342.90M581.86 348.55H584.26M583.06 347.35V349.75M588.80 225.25H591.20M590.00 224.05V226.45M588.80 232.10H591.20M590.00 230.90V233.30M588.80 238.95H591.20M590.00 237.75V240.15M588.80 245.80H591.20M590.00 244.60V247.00M588.80 252.65H591.20M590.00 251.45V253.85M588.80 259.50H591.20M590.00 258.30V260.70M588.80 266.35H591.20M590.00 265.15V267.55M588.80 273.20H591.20M590.00 272.00V274.40M588.80 280.05H591.20M590.00 278.85V281.25M588.80 286.90H591.20M590.00 285.70V288.10M588.80 293.75H591.20M590.00 292.55V294.95M588.80 300.60H591.20M590.00 299.40V301.80M588.80 307.45H591.20M590.00 306.25V308.65M588.80 314.30H591.20M590.00 313.10V315.50M588.80 321.15H591.20M590.00 319.95V322.35M588.80 328.00H591.20M590.00 326.80V329.20M588.80 334.85H591.20M590.00 333.65V336.05M588.80 341.70H591.20M590.00 340.50V342.90M588.80 348.55H591.20M590.00 347.35V349.75M595.74 225.25H598.14M596.94 224.05V226.45M595.74 232.10H598.14M596.94 230.90V233.30M595.74 238.95H598.14M596.94 237.75V240.15M595.74 245.80H598.14M596.94 244.60V247.00M595.74 252.65H598.14M596.94 251.45V253.85M595.74 259.50H598.14M596.94 258.30V260.70M595.74 266.35H598.14M596.94 265.15V267.55M595.74 273.20H598.14M596.94 272.00V274.40M595.74 280.05H598.14M596.94 278.85V281.25M595.74 286.90H598.14M596.94 285.70V288.10M595.74 293.75H598.14M596.94 292.55V294.95M595.74 300.60H598.14M596.94 299.40V301.80M595.74 307.45H598.14M596.94 306.25V308.65M595.74 314.30H598.14M596.94 313.10V315.50M595.74 321.15H598.14M596.94 319.95V322.35M595.74 328.00H598.14M596.94 326.80V329.20M595.74 334.85H598.14M596.94 333.65V336.05M595.74 341.70H598.14M596.94 340.50V342.90M595.74 348.55H598.14M596.94 347.35V349.75M602.68 225.25H605.08M603.88 224.05V226.45M602.68 232.10H605.08M603.88 230.90V233.30M602.68 238.95H605.08M603.88 237.75V240.15M602.68 245.80H605.08M603.88 244.60V247.00M602.68 252.65H605.08M603.88 251.45V253.85M602.68 259.50H605.08M603.88 258.30V260.70M602.68 266.35H605.08M603.88 265.15V267.55M602.68 273.20H605.08M603.88 272.00V274.40M602.68 280.05H605.08M603.88 278.85V281.25M602.68 286.90H605.08M603.88 285.70V288.10M602.68 293.75H605.08M603.88 292.55V294.95M602.68 300.60H605.08M603.88 299.40V301.80M602.68 307.45H605.08M603.88 306.25V308.65M602.68 314.30H605.08M603.88 313.10V315.50M602.68 321.15H605.08M603.88 319.95V322.35M602.68 328.00H605.08M603.88 326.80V329.20M602.68 334.85H605.08M603.88 333.65V336.05M602.68 341.70H605.08M603.88 340.50V342.90M602.68 348.55H605.08M603.88 347.35V349.75M609.62 225.25H612.02M610.82 224.05V226.45M609.62 232.10H612.02M610.82 230.90V233.30M609.62 238.95H612.02M610.82 237.75V240.15M609.62 245.80H612.02M610.82 244.60V247.00M609.62 252.65H612.02M610.82 251.45V253.85M609.62 259.50H612.02M610.82 258.30V260.70M609.62 266.35H612.02M610.82 265.15V267.55M609.62 273.20H612.02M610.82 272.00V274.40M609.62 280.05H612.02M610.82 278.85V281.25M609.62 286.90H612.02M610.82 285.70V288.10M609.62 293.75H612.02M610.82 292.55V294.95M609.62 300.60H612.02M610.82 299.40V301.80M609.62 307.45H612.02M610.82 306.25V308.65M609.62 314.30H612.02M610.82 313.10V315.50M609.62 321.15H612.02M610.82 319.95V322.35M609.62 328.00H612.02M610.82 326.80V329.20M609.62 334.85H612.02M610.82 333.65V336.05M609.62 341.70H612.02M610.82 340.50V342.90M609.62 348.55H612.02M610.82 347.35V349.75M616.56 225.25H618.96M617.76 224.05V226.45M616.56 232.10H618.96M617.76 230.90V233.30M616.56 238.95H618.96M617.76 237.75V240.15M616.56 245.80H618.96M617.76 244.60V247.00M616.56 252.65H618.96M617.76 251.45V253.85M616.56 259.50H618.96M617.76 258.30V260.70M616.56 266.35H618.96M617.76 265.15V267.55M616.56 273.20H618.96M617.76 272.00V274.40M616.56 280.05H618.96M617.76 278.85V281.25M616.56 286.90H618.96M617.76 285.70V288.10M616.56 293.75H618.96M617.76 292.55V294.95M616.56 300.60H618.96M617.76 299.40V301.80M616.56 307.45H618.96M617.76 306.25V308.65M616.56 314.30H618.96M617.76 313.10V315.50M616.56 321.15H618.96M617.76 319.95V322.35M616.56 328.00H618.96M617.76 326.80V329.20M616.56 334.85H618.96M617.76 333.65V336.05M616.56 341.70H618.96M617.76 340.50V342.90M616.56 348.55H618.96M617.76 347.35V349.75" stroke="#262626" stroke-width="1" fill="none"/></svg><div class="box" style="left:82.2px;top:403.2px;width:37.6px;height:14.4px;background:#3c3f42;box-shadow:inset 0 1px 0 #4a4d50, inset 0 -1px 0 #2a2c2e"></div><div class="box" style="left:123.75px;top:403.2px;width:48.05px;height:14.4px;background:#3c3f42;box-shadow:inset 0 1px 0 #4a4d50, inset 0 -1px 0 #2a2c2e"></div><div class="box" style="left:175.75px;top:403.2px;width:59.05px;height:14.4px;background:#3c3f42;box-shadow:inset 0 1px 0 #4a4d50, inset 0 -1px 0 #2a2c2e"></div><div class="box" style="left:344.7px;top:364.6px;width:307.1px;height:105.2px;background:#1c1d1f;box-shadow:0 0 0 1px #111213"></div><div class="box" style="left:344.7px;top:473.8px;width:253.4px;height:14.4px;background:#3c4245"></div><div class="box" style="left:600.2px;top:473.4px;width:51px;height:14.2px;background:#3c3f42;box-shadow:inset 0 1px 0 #4a4d50"></div><div class="box" style="left:652.9px;top:337.8px;width:15.9px;height:16.2px;background:#121212;border-radius:3px"></div><svg class="box" style="left:652.9px;top:337.8px" width="16" height="17" viewBox="0 0 16 17"><circle cx="6.9" cy="6.6" r="3.7" fill="none" stroke="#8a8a8a" stroke-width="1.8"/><circle cx="6.9" cy="6.6" r="1" fill="#8a8a8a"/><line x1="9.5" y1="9.3" x2="13.4" y2="13.2" stroke="#8a8a8a" stroke-width="1.8"/></svg><div class="box" style="left:652.1px;top:431px;width:17.6px;height:16.5px;background:#2a2a2b;border-radius:0 3px 3px 0"></div><svg class="box" style="left:652.1px;top:431px" width="18" height="17" viewBox="0 0 18 17"><rect x="1.7" y="2.7" width="11" height="7.6" rx="1.6" fill="#cfcfcf"/><path d="M3 10h2.8l-2.9 2.8z" fill="#cfcfcf"/><rect x="6.6" y="5.5" width="9.8" height="7.2" rx="1.8" fill="#2a2a2b"/><rect x="7.3" y="6.2" width="8.4" height="5.8" rx="1.5" fill="#7d7d7d"/><path d="M12.6 11.8h2.6l-0.3 2.8z" fill="#7d7d7d"/></svg><div class="box" style="left:652.1px;top:452.4px;width:17.6px;height:16px;background:#2a2a2b;border-radius:0 3px 3px 0"></div><svg class="box" style="left:652.1px;top:452.4px" width="18" height="16" viewBox="0 0 18 16"><path d="M3.6 11.2L9 5.9l5.4 5.3" fill="none" stroke="#d8d8d8" stroke-width="2.5"/></svg><div class="t" style="left:3px;top:7.38px;font-size:14.2px;line-height:14.2px;color:#fff;font-weight:normal;font-style:normal;font-family:'Liberation Sans', sans-serif;transform:scaleX(1.0571);-webkit-text-stroke:0.45px #fff">Jstris</div><div class="t" style="left:59px;top:8.28px;font-size:11.6px;line-height:11.6px;color:#fff;font-weight:normal;font-style:normal;font-family:'Liberation Sans', sans-serif;transform:scaleX(0.9884);-webkit-text-stroke:0.45px #fff">Play</div><div class="t" style="left:111.6px;top:8.28px;font-size:11.6px;line-height:11.6px;color:#fff;font-weight:normal;font-style:normal;font-family:'Liberation Sans', sans-serif;transform:scaleX(1.0157);-webkit-text-stroke:0.45px #fff">Leaderboard</div><div class="t" style="left:208.6px;top:8.28px;font-size:11.6px;line-height:11.6px;color:#fff;font-weight:normal;font-style:normal;font-family:'Liberation Sans', sans-serif;transform:scaleX(1.0014);-webkit-text-stroke:0.45px #fff">Maps</div><div class="t" style="left:267.5px;top:8.28px;font-size:11.6px;line-height:11.6px;color:#fff;font-weight:normal;font-style:normal;font-family:'Liberation Sans', sans-serif;transform:scaleX(0.9535);-webkit-text-stroke:0.45px #fff">Guide</div><div class="t" style="left:317.6px;top:8.28px;font-size:11.6px;line-height:11.6px;color:#fff;font-weight:normal;font-style:normal;font-family:'Liberation Sans', sans-serif;transform:scaleX(1.0194);-webkit-text-stroke:0.45px #fff">About</div><div class="t" style="left:581.4px;top:5.18px;font-size:11.6px;line-height:11.6px;color:#fff;font-weight:normal;font-style:normal;font-family:'Liberation Sans', sans-serif;transform:scaleX(0.9298);-webkit-text-stroke:0.45px #fff">en</div><div class="t" style="left:624.5px;top:5.18px;font-size:11.6px;line-height:11.6px;color:#fff;font-weight:normal;font-style:normal;font-family:'Liberation Sans', sans-serif;transform:scaleX(0.9903);-webkit-text-stroke:0.45px #fff">Login</div><div class="t" style="left:87.5px;top:405.41px;font-size:10.5px;line-height:10.5px;color:#fff;font-weight:normal;font-style:normal;font-family:'Liberation Sans', sans-serif;transform:scaleX(0.9437);-webkit-text-stroke:0.3px #fff">Lobby</div><div class="t" style="left:129px;top:405.41px;font-size:10.5px;line-height:10.5px;color:#fff;font-weight:normal;font-style:normal;font-family:'Liberation Sans', sans-serif;transform:scaleX(0.9881);-webkit-text-stroke:0.3px #fff">Settings</div><div class="t" style="left:181.5px;top:405.41px;font-size:10.5px;line-height:10.5px;color:#ccc;font-weight:normal;font-style:normal;font-family:'Liberation Sans', sans-serif;transform:scaleX(0.9661);-webkit-text-stroke:0.3px #ccc">New game</div><div class="t" style="left:136.7px;top:428.66px;font-size:10.8px;line-height:10.8px;color:#ddd;font-weight:normal;font-style:normal;font-family:'Liberation Sans', sans-serif;transform:scaleX(0.9325)">Time</div><div class="t" style="left:129.2px;top:441.56px;font-size:10.8px;line-height:10.8px;color:#ddd;font-weight:normal;font-style:normal;font-family:'Liberation Sans', sans-serif;transform:scaleX(0.9828)">Attack</div><div class="t" style="left:118px;top:454.36px;font-size:10.8px;line-height:10.8px;color:#ddd;font-weight:normal;font-style:normal;font-family:'Liberation Sans', sans-serif;transform:scaleX(0.9041)">Received</div><div class="t" style="left:141.2px;top:467.16px;font-size:10.8px;line-height:10.8px;color:#ddd;font-weight:normal;font-style:normal;font-family:'Liberation Sans', sans-serif;transform:scaleX(0.8098)">PPS</div><div class="t" style="left:137.7px;top:480.06px;font-size:10.8px;line-height:10.8px;color:#ddd;font-weight:normal;font-style:normal;font-family:'Liberation Sans', sans-serif;transform:scaleX(0.8972)">APM</div><div class="t" style="left:166.6px;top:428.82px;font-size:11.2px;line-height:11.2px;color:#adadad;font-weight:bold;font-style:normal;font-family:'Liberation Sans', sans-serif;transform:scaleX(1.1061);letter-spacing:1.0px">22.35</div><div class="t" style="left:166.6px;top:441.72px;font-size:11.2px;line-height:11.2px;color:#adadad;font-weight:bold;font-style:normal;font-family:'Liberation Sans', sans-serif;transform:scaleX(1.0505);letter-spacing:1.0px">0</div><div class="t" style="left:166.6px;top:454.52px;font-size:11.2px;line-height:11.2px;color:#adadad;font-weight:bold;font-style:normal;font-family:'Liberation Sans', sans-serif;transform:scaleX(1.0505);letter-spacing:1.0px">0</div><div class="t" style="left:166.6px;top:467.32px;font-size:11.2px;line-height:11.2px;color:#adadad;font-weight:bold;font-style:normal;font-family:'Liberation Sans', sans-serif;transform:scaleX(1.1248);letter-spacing:1.0px">0.18</div><div class="t" style="left:166.6px;top:480.22px;font-size:11.2px;line-height:11.2px;color:#adadad;font-weight:bold;font-style:normal;font-family:'Liberation Sans', sans-serif;transform:scaleX(1.0505);letter-spacing:1.0px">0</div><div class="t" style="left:370.5px;top:51.98px;font-size:10.3px;line-height:10.3px;color:#fff;font-weight:normal;font-style:normal;font-family:'Liberation Sans', sans-serif;transform:scaleX(1.0000);-webkit-text-stroke:0.3px #fff">Hihaywo</div><div class="t" style="left:462.5px;top:51.98px;font-size:10.3px;line-height:10.3px;color:#30a6e0;font-weight:normal;font-style:normal;font-family:'Liberation Sans', sans-serif;transform:scaleX(0.9941);-webkit-text-stroke:0.3px #30a6e0">ureneus</div><div class="t" style="left:554.8px;top:51.98px;font-size:10.3px;line-height:10.3px;color:#fff;font-weight:normal;font-style:normal;font-family:'Liberation Sans', sans-serif;transform:scaleX(1.0080);-webkit-text-stroke:0.3px #fff">Valeki</div><div class="t" style="left:370.5px;top:207.58px;font-size:10.3px;line-height:10.3px;color:#fff;font-weight:normal;font-style:normal;font-family:'Liberation Sans', sans-serif;transform:scaleX(0.9497);-webkit-text-stroke:0.3px #fff">Ocnabi</div><div class="t" style="left:462.8px;top:207.58px;font-size:10.3px;line-height:10.3px;color:#fff;font-weight:normal;font-style:normal;font-family:'Liberation Sans', sans-serif;transform:scaleX(1.0346);-webkit-text-stroke:0.3px #fff">Miljies</div><div class="t" style="left:560px;top:158.29px;font-size:11px;line-height:11px;color:#b2b2b2;font-weight:bold;font-style:normal;font-family:'Liberation Sans', sans-serif;transform:scaleX(1.0519)">Not playing</div><div class="t" style="left:467.6px;top:314.29px;font-size:11px;line-height:11px;color:#b2b2b2;font-weight:bold;font-style:normal;font-family:'Liberation Sans', sans-serif;transform:scaleX(1.0519)">Not playing</div><div class="t" style="left:348.4px;top:366.3px;font-size:12.4px;line-height:12.4px;color:#bababa;font-weight:normal;font-style:italic;font-family:'Liberation Sans', sans-serif;transform:scaleX(0.9323);-webkit-text-stroke:0.3px #bababa">Welcome, Rotonsp!</div><div class="t" style="left:348.4px;top:379.9px;font-size:12.4px;line-height:12.4px;color:#bababa;font-weight:normal;font-style:italic;font-family:'Liberation Sans', sans-serif;transform:scaleX(0.9687);-webkit-text-stroke:0.3px #bababa">Type /help for available commands.</div><div class="t" style="left:348.4px;top:394.8px;font-size:12.4px;line-height:12.4px;color:#bababa;font-weight:normal;font-style:italic;font-family:'Liberation Sans', sans-serif;transform:scaleX(0.9391);-webkit-text-stroke:0.3px #bababa">Watching: Kalege</div><div class="t" style="left:348.5px;top:408.6px;font-size:12.4px;line-height:12.4px;color:#55ee55;font-weight:bold;font-style:normal;font-family:'Liberation Sans', sans-serif;transform:scaleX(0.8822)">News:</div><div class="t" style="left:384.6px;top:408.6px;font-size:12.4px;line-height:12.4px;color:#2aa5e0;font-weight:normal;font-style:normal;font-family:'Liberation Sans', sans-serif;transform:scaleX(0.9539);-webkit-text-stroke:0.3px #2aa5e0">Results of the blockskin &amp; emote design</div><div class="t" style="left:348.5px;top:423.6px;font-size:12.4px;line-height:12.4px;color:#2aa5e0;font-weight:normal;font-style:normal;font-family:'Liberation Sans', sans-serif;transform:scaleX(0.9862);-webkit-text-stroke:0.3px #2aa5e0">competition</div><div class="t" style="left:614.5px;top:475.86px;font-size:10.8px;line-height:10.8px;color:#fff;font-weight:normal;font-style:normal;font-family:'Liberation Sans', sans-serif;transform:scaleX(0.8922);-webkit-text-stroke:0.3px #fff">Send</div><div class="t" style="left:539.5px;top:491.7px;font-size:7.8px;line-height:7.8px;color:#bbb;font-weight:normal;font-style:normal;font-family:'Liberation Sans', sans-serif;transform:scaleX(0.8409)">Connected (client 18714063), v1.37.17</div></body></html>
